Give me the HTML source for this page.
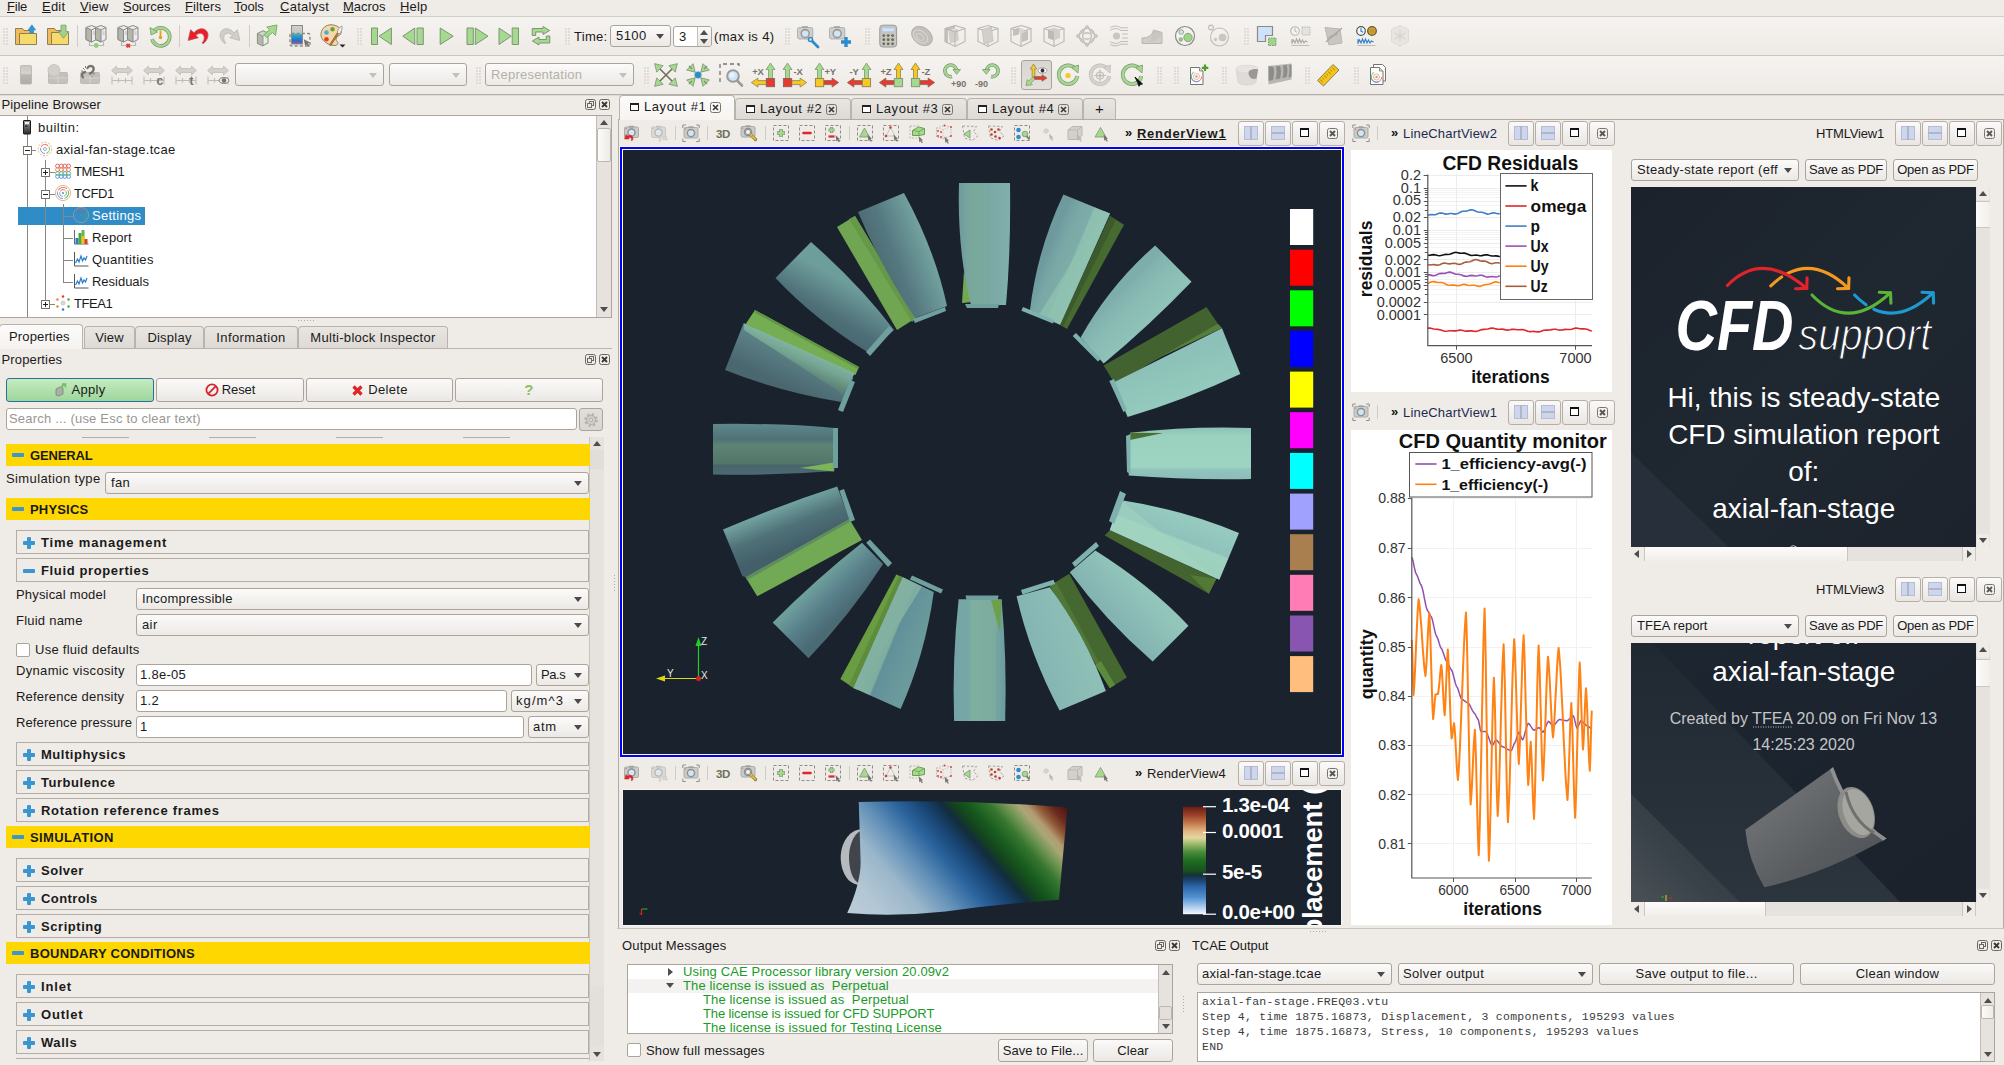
<!DOCTYPE html><html><head><meta charset="utf-8"><title>TCAE</title><style>
*{box-sizing:border-box;margin:0;padding:0}
html,body{width:2004px;height:1065px;overflow:hidden;background:#efebe7}
body{position:relative;font-family:"Liberation Sans",sans-serif;font-size:13px;color:#1a1a1a;letter-spacing:.2px}
.a{position:absolute}
.t{position:absolute;white-space:nowrap;line-height:16px;height:16px}
.b{font-weight:bold}
.hl{position:absolute;height:1px;background:#c6c0b9}
.vl{position:absolute;width:1px;background:#c6c0b9}
.btn{position:absolute;border:1px solid #aaa49d;border-radius:3px;background:linear-gradient(#fbfaf9,#ebe8e4);text-align:center;white-space:nowrap;line-height:20px;overflow:hidden}
.cmb{position:absolute;border:1px solid #aaa49d;border-radius:3px;background:linear-gradient(#fcfbfa,#ece9e5);white-space:nowrap;line-height:20px;padding-left:5px;overflow:hidden}
.cmb:after{content:"";position:absolute;right:6px;top:50%;margin-top:-2px;border:4px solid transparent;border-top:5px solid #4a4a4a;border-bottom:0}
.cmb.dis{color:#b5b0aa}
.cmb.dis:after{border-top-color:#c5c0ba}
.inp{position:absolute;border:1px solid #aaa49d;border-radius:3px;background:#fff;white-space:nowrap;line-height:20px;padding-left:4px;overflow:hidden}
.chk{position:absolute;width:14px;height:14px;border:1px solid #aaa49d;border-radius:2px;background:#fff}
.box{position:absolute;border:1px solid #aaa49d;background:#fff}
.grp{position:absolute;left:16px;width:573px;height:24px;border:1px solid #b3ada6;background:#efebe7}
.grp .t{left:24px;top:4px;font-weight:bold}
.ylw{position:absolute;left:6px;width:584px;height:22px;background:#ffd700}
.ylw .t{left:24px;top:3.5px;font-weight:bold}
.plus{position:absolute;left:6px;top:6px;width:12px;height:12px}
.plus:before{content:"";position:absolute;left:0;top:4px;width:12px;height:4px;background:#3b95d0;border-radius:1px}
.plus:after{content:"";position:absolute;left:4px;top:0;width:4px;height:12px;background:#3b95d0;border-radius:1px}
.minus{position:absolute;left:6px;top:10px;width:12px;height:4px;background:#3b95d0;border-radius:1px}
.sbv{position:absolute;width:15px;background:#e6e3df;border:1px solid #c2bdb6}
.sbh{position:absolute;height:14px;background:#e6e3df;border:1px solid #c2bdb6}
.thumb{position:absolute;background:linear-gradient(90deg,#fcfbfa,#eeebe7);border:1px solid #bdb7b0;border-radius:2px}
.thumbh{position:absolute;background:linear-gradient(#fdfcfb,#f1eeea);border:0;border-left:1px solid #cbc6c0;border-right:1px solid #cbc6c0;margin-top:-1px;height:14px !important}
.au{position:absolute;border:4px solid transparent;border-bottom:5px solid #4d4d4d;border-top:0}
.ad{position:absolute;border:4px solid transparent;border-top:5px solid #4d4d4d;border-bottom:0}
.al{position:absolute;border:4px solid transparent;border-right:5px solid #4d4d4d;border-left:0}
.ar{position:absolute;border:4px solid transparent;border-left:5px solid #4d4d4d;border-right:0}
.vbtn{position:absolute;width:26px;height:25px;border:1px solid #b5afa8;border-radius:3px;background:linear-gradient(#fbfaf9,#e9e6e2)}
.tab{position:absolute;border:1px solid #b9b3ac;border-bottom:0;border-radius:4px 4px 0 0;background:linear-gradient(#e9e5e1,#ddd9d4);white-space:nowrap;text-align:center}
.tab.sel{background:linear-gradient(#fcfbfa,#f6f3f0)}
.grip{position:absolute;width:6px;height:18px;margin-top:3px;background-image:linear-gradient(#cbc6c0,#cbc6c0);background-size:1px 1px;background-repeat:no-repeat;background-image:radial-gradient(circle at 1px 1px,#d2cdc7 0.5px,transparent 1px);background-size:3px 3px;background-repeat:repeat}
.ic{position:absolute;width:24px;height:24px}
.vi{position:absolute;width:16px;height:16px}
svg{display:block;overflow:visible;letter-spacing:0}
</style></head><body><div class="t " style="left:7px;top:-1px;font-size:13px;letter-spacing:-0.22px;"><u>F</u>ile</div><div class="t " style="left:42px;top:-1px;font-size:13px;letter-spacing:0.21px;"><u>E</u>dit</div><div class="t " style="left:80px;top:-1px;font-size:13px;letter-spacing:0.13px;"><u>V</u>iew</div><div class="t " style="left:123px;top:-1px;font-size:13px;letter-spacing:-0.03px;"><u>S</u>ources</div><div class="t " style="left:185px;top:-1px;font-size:13px;letter-spacing:0.08px;"><u>F</u>ilters</div><div class="t " style="left:234px;top:-1px;font-size:13px;letter-spacing:-0.16px;"><u>T</u>ools</div><div class="t " style="left:280px;top:-1px;font-size:13px;letter-spacing:0.28px;"><u>C</u>atalyst</div><div class="t " style="left:343px;top:-1px;font-size:13px;letter-spacing:-0.01px;"><u>M</u>acros</div><div class="t " style="left:400px;top:-1px;font-size:13px;letter-spacing:0.16px;"><u>H</u>elp</div><div class="hl" style="left:0;top:16px;width:2004px;background:#d2cdc7"></div><div class="a" style="left:0;top:17px;width:2004px;height:38px;background:linear-gradient(#f5f3f0,#eeeae6)"></div><div class="hl" style="left:0;top:55px;width:2004px;background:#c9c4bd"></div><div class="a" style="left:0;top:56px;width:2004px;height:38px;background:linear-gradient(#f5f3f0,#eeeae6)"></div><div class="hl" style="left:0;top:94px;width:2004px;background:#b5b0aa"></div><div class="hl" style="left:0;top:95px;width:2004px;background:#dedad5"></div><div class="grip" style="left:3px;top:25px"></div><svg class="ic" style="left:14px;top:24px;width:24px;height:24px" viewBox="0 0 24 24"><path d="M1.500 4.500h7l1.500 2h6v14h-14.500z" fill="#f3ba5c" stroke="#8b8158" stroke-width="1"/><path d="M5.500 9.500h17v11h-17z" fill="#f6da6c" stroke="#8b8158" stroke-width="1"/><path d="M17.900 .8l3.800 5.200h-2.100v3h-3.400v-3h-2.100z" fill="#2c98dc" stroke="#2c82bc" stroke-width=".5"/></svg><svg class="ic" style="left:46px;top:24px;width:24px;height:24px" viewBox="0 0 24 24"><path d="M1.500 4.500h7l1.500 2h6v14h-14.500z" fill="#f3ba5c" stroke="#8b8158"/><path d="M5.500 8.500h17v12h-17z" fill="#f6da6c" stroke="#8b8158"/><path d="M15 1.200h5v6.300h2.600l-5.100 6.800-5.100-6.800h2.600z" fill="#9ed488" stroke="#7e9572" stroke-width=".8"/></svg><div class="vl" style="left:77px;top:25px;height:22px;background:#d0cbc5"></div><svg class="ic" style="left:84px;top:24px;width:24px;height:24px" viewBox="0 0 24 24"><path d="M2 3.500l5.500-2 5 2v12l-5 2.500-5.500-2.500z" fill="#eceaf0" stroke="#8a8a86" stroke-width="1"/><path d="M2 3.500l5.500 2.500v12l-5.500-2.500z" fill="#b4b7a8" stroke="#8a8a86" stroke-width="1"/><path d="M7.5 6l5-2.500" stroke="#8a8a86" stroke-width="1" fill="none"/><path d="M9 8h2M9 10h2" stroke="#aaa" stroke-width=".8"/><path d="M11.5 3.500l5.500-2 5 2v12l-5 2.500-5.500-2.500z" fill="#eceaf0" stroke="#8a8a86" stroke-width="1"/><path d="M11.5 3.500l5.500 2.500v12l-5.500-2.500z" fill="#b4b7a8" stroke="#8a8a86" stroke-width="1"/><path d="M17 6l5-2.500" stroke="#8a8a86" stroke-width="1" fill="none"/><path d="M18.5 8h2M18.5 10h2" stroke="#aaa" stroke-width=".8"/><path d="M5.500 18v3.500h14v-3.500" fill="none" stroke="#b8b8b8" stroke-width="1.200"/><circle cx="12.200" cy="21.500" r="2.400" fill="#8fce7a"/></svg><svg class="ic" style="left:116px;top:24px;width:24px;height:24px" viewBox="0 0 24 24"><path d="M2 3.500l5.500-2 5 2v12l-5 2.500-5.500-2.500z" fill="#eceaf0" stroke="#8a8a86" stroke-width="1"/><path d="M2 3.500l5.500 2.500v12l-5.500-2.500z" fill="#b4b7a8" stroke="#8a8a86" stroke-width="1"/><path d="M7.5 6l5-2.500" stroke="#8a8a86" stroke-width="1" fill="none"/><path d="M9 8h2M9 10h2" stroke="#aaa" stroke-width=".8"/><path d="M11.5 3.500l5.500-2 5 2v12l-5 2.500-5.500-2.500z" fill="#eceaf0" stroke="#8a8a86" stroke-width="1"/><path d="M11.5 3.500l5.500 2.500v12l-5.500-2.500z" fill="#b4b7a8" stroke="#8a8a86" stroke-width="1"/><path d="M17 6l5-2.500" stroke="#8a8a86" stroke-width="1" fill="none"/><path d="M18.5 8h2M18.5 10h2" stroke="#aaa" stroke-width=".8"/><path d="M5.500 18v3.500h14v-3.500" fill="none" stroke="#b8b8b8" stroke-width="1.200"/><path d="M10.500 20l3.400 3.400M13.900 20l-3.400 3.400" stroke="#e03a30" stroke-width="1.800"/></svg><svg class="ic" style="left:148px;top:24px;width:24px;height:24px" viewBox="0 0 24 24"><path d="M5.500 7.500A9 9 0 1 1 4 15" fill="none" stroke="#7e9572" stroke-width="3.600"/><path d="M5.500 7.500A9 9 0 1 1 4 15" fill="none" stroke="#a6d990" stroke-width="2.200"/><path d="M2 3.500l1 7.500 6.500-3z" fill="#a6d990" stroke="#7e9572" stroke-width=".8"/><path d="M12.500 6.500v6" stroke="#d9a520" stroke-width="1.800"/><circle cx="12.500" cy="13.500" r="1.700" fill="#d9a520"/></svg><div class="vl" style="left:179px;top:25px;height:22px;background:#d0cbc5"></div><svg class="ic" style="left:186px;top:24px;width:24px;height:24px" viewBox="0 0 24 24"><path d="M4.600 5.800L2.100 16.400L12.200 13.800L10 11.500C12 8.500 17.500 8 18.200 13C18.500 15.500 17.500 17.500 16 19L17.500 19.400C21 16.500 23 12 21.500 8.500C19.500 4 13 3 8 8.800Z" fill="#ee1c24" stroke="#b85058" stroke-width=".8" stroke-linejoin="round"/></svg><svg class="ic" style="left:218px;top:24px;width:24px;height:24px" viewBox="0 0 24 24"><g transform="translate(24,0) scale(-1,1)"><path d="M4.600 5.800L2.100 16.400L12.200 13.800L10 11.500C12 8.500 17.500 8 18.200 13C18.500 15.500 17.500 17.500 16 19L17.500 19.400C21 16.500 23 12 21.500 8.500C19.500 4 13 3 8 8.800Z" fill="#d0cecb" stroke="#b9b6b2" stroke-width=".8" stroke-linejoin="round"/></g></svg><div class="vl" style="left:249px;top:25px;height:22px;background:#d0cbc5"></div><svg class="ic" style="left:255px;top:24px;width:24px;height:24px" viewBox="0 0 24 24"><path d="M2.500 9.500l5.500-2.500 5 2v10l-5 2.500-5.500-2.500z" fill="#eceaf0" stroke="#7fae6c" stroke-width="1.200"/><path d="M2.500 9.500l5.500 2.500v10l-5.500-2.500z" fill="#b4b7a8" stroke="#8a8a86" stroke-width=".8"/><path d="M2.500 9.500l5.500 2.500 5-3-5-2z" fill="#d5d5d0" stroke="#8a8a86" stroke-width=".6"/><path d="M11.500 13.500l-2.500-2.800 5.500-5-2.800-2.700 10.300-2-1.500 10.500-3-3z" fill="#a6d990" stroke="#7fae6c" stroke-width="1"/></svg><svg class="ic" style="left:287px;top:24px;width:24px;height:24px" viewBox="0 0 24 24"><defs><linearGradient id="csg" x1="0" y1="0" x2="0" y2="1"><stop offset="0" stop-color="#d0d0ce"/><stop offset=".42" stop-color="#c4c4c2"/><stop offset=".46" stop-color="#3fb8a0"/><stop offset=".58" stop-color="#2a9ad8"/><stop offset=".8" stop-color="#2a6fc0"/><stop offset="1" stop-color="#8a55b0"/></linearGradient></defs><rect x="4.500" y="1.500" width="11" height="18.500" fill="url(#csg)" stroke="#8a8a86"/><rect x="3" y="9.500" width="20" height="12.500" rx="1.500" fill="none" stroke="#8a8a86" stroke-width="1.400" stroke-dasharray="3 2.200"/><path d="M16.800 15.300l6.300 3.200-2.200.9 2 2.600-1.200 1-2-2.600-1.500 1.800z" fill="#77736d"/></svg><svg class="ic" style="left:320px;top:24px;width:24px;height:24px" viewBox="0 0 24 24"><path d="M11 .8c7.500 0 11 5 10 8.500-1 3-5 2.500-5 6 0 2 3 2.500 1.500 5-1 1.800-5 1.500-8.500 0C2 17.500.5 12 1 9.500 2 4 6 .8 11 .8z" fill="#f6d7a8" stroke="#8b8158" stroke-width="1"/><circle cx="6.500" cy="8.500" r="2.300" fill="#3cb0e8"/><circle cx="12.500" cy="5.200" r="2.200" fill="#64a434"/><circle cx="6.500" cy="15.300" r="2.300" fill="#e63a2c"/><path d="M10 21.500l9-14" stroke="#8a5a2a" stroke-width="2.200"/><path d="M10 21.500l9-14" stroke="#b98a4a" stroke-width="1"/><path d="M17.500 8.500c0-3 2-5.500 4.500-6.500.5 2.500-.5 6-3 8z" fill="#f6f6f6" stroke="#8a8a86" stroke-width=".8"/><path d="M19.500 20.500h6l-3 3z" fill="#222"/></svg><div class="grip" style="left:357px;top:25px"></div><svg class="ic" style="left:369px;top:24px;width:24px;height:24px" viewBox="0 0 24 24"><path d="M2.500 4h6v16.500h-6z" fill="#a6d990" stroke="#7e9572" stroke-width="1" stroke-linejoin="round"/><path d="M10 12.200l12.400-8.200v16.500z" fill="#a6d990" stroke="#7e9572" stroke-width="1" stroke-linejoin="round"/></svg><svg class="ic" style="left:401px;top:24px;width:24px;height:24px" viewBox="0 0 24 24"><path d="M1.800 12.200l12-8.200v16.500z" fill="#a6d990" stroke="#7e9572" stroke-width="1" stroke-linejoin="round"/><path d="M16 4h6.300v16.500h-6.300z" fill="#a6d990" stroke="#7e9572" stroke-width="1" stroke-linejoin="round"/></svg><svg class="ic" style="left:434px;top:24px;width:24px;height:24px" viewBox="0 0 24 24"><path d="M6.200 4l13 8.200-13 8.300z" fill="#a6d990" stroke="#7e9572" stroke-width="1" stroke-linejoin="round"/></svg><svg class="ic" style="left:465px;top:24px;width:24px;height:24px" viewBox="0 0 24 24"><path d="M2 4h6.300v16.500h-6.300z" fill="#a6d990" stroke="#7e9572" stroke-width="1" stroke-linejoin="round"/><path d="M10.300 4l12.700 8.200-12.700 8.300z" fill="#a6d990" stroke="#7e9572" stroke-width="1" stroke-linejoin="round"/></svg><svg class="ic" style="left:497px;top:24px;width:24px;height:24px" viewBox="0 0 24 24"><path d="M2 4l12.200 8.200-12.200 8.300z" fill="#a6d990" stroke="#7e9572" stroke-width="1" stroke-linejoin="round"/><path d="M15.200 4h6.300v16.500h-6.300z" fill="#a6d990" stroke="#7e9572" stroke-width="1" stroke-linejoin="round"/></svg><svg class="ic" style="left:529px;top:24px;width:24px;height:24px" viewBox="0 0 24 24"><path d="M3.200 11.500v-7h10.800v-2l6.600 4-6.600 4v-2.500h-7.300v3.500z" fill="#a6d990" stroke="#7e9572" stroke-width="1" stroke-linejoin="round"/><path d="M20.800 12v7h-10.800v2l-6.600-4 6.600-4v2.500h7.300v-3.500z" fill="#a6d990" stroke="#7e9572" stroke-width="1" stroke-linejoin="round"/></svg><div class="grip" style="left:565px;top:25px"></div><div class="t " style="left:574px;top:29px;font-size:13px;letter-spacing:0.28px;">Time:</div><div class="cmb" style="left:610px;top:25px;width:61px;height:22px;line-height:19px;padding-left:5px;font-size:13px;letter-spacing:0.40px;">5100</div><div class="inp" style="left:673px;top:25.500px;width:39px;height:21.500px;line-height:19px;padding-left:5px;font-size:13px;letter-spacing:0.40px;">3</div><div class="a" style="left:697px;top:26.500px;width:14px;height:19.500px;border-left:1px solid #c5bfb8;background:linear-gradient(#fbfaf9,#e9e6e2);border-radius:0 2px 2px 0"></div><div class="au" style="left:700px;top:30px;border-width:0 4px 5px 4px"></div><div class="ad" style="left:700px;top:38.500px;border-width:5px 4px 0 4px"></div><div class="t " style="left:714px;top:29px;font-size:13px;letter-spacing:0.33px;">(max is 4)</div><div class="grip" style="left:785px;top:25px"></div><svg class="ic" style="left:796px;top:24px;width:24px;height:24px" viewBox="0 0 24 24"><rect x="1.5" y="3.5" width="15.300" height="11.500" rx="2" fill="#cfcfcd" stroke="#a5a5a2" stroke-width=".8"/><rect x="6" y="2.2" width="6" height="1.800" fill="#a5a5a2"/><circle cx="9.2" cy="9.6" r="4" fill="#cfe6f8" stroke="#9a9a98" stroke-width="1.600"/><path d="M15 16l7 7" stroke="#2a8ccc" stroke-width="2.800" stroke-linecap="round"/><circle cx="14.500" cy="15.500" r="2" fill="#efebe7" stroke="#2a8ccc" stroke-width="1.600"/></svg><svg class="ic" style="left:828px;top:24px;width:24px;height:24px" viewBox="0 0 24 24"><rect x="1.5" y="3.5" width="15.300" height="11.500" rx="2" fill="#cfcfcd" stroke="#a5a5a2" stroke-width=".8"/><rect x="6" y="2.2" width="6" height="1.800" fill="#a5a5a2"/><circle cx="9.2" cy="9.6" r="4" fill="#cfe6f8" stroke="#9a9a98" stroke-width="1.600"/><path d="M18 13v10M13 18h10" stroke="#2a8ccc" stroke-width="3.400"/></svg><div class="grip" style="left:865px;top:25px"></div><svg class="ic" style="left:876px;top:24px;width:24px;height:24px" viewBox="0 0 24 24"><rect x="3.800" y="1.200" width="16.800" height="21.800" rx="3" fill="#c6c6c4" stroke="#98989a" stroke-width="1"/><rect x="6" y="3.800" width="12.400" height="4" rx="1.200" fill="#cfe2fa" stroke="#a8b8d0" stroke-width=".5"/><circle cx="7.8" cy="11.6" r="1.400" fill="#6c6a48"/><circle cx="7.8" cy="15.7" r="1.400" fill="#6c6a48"/><circle cx="7.8" cy="19.8" r="1.400" fill="#6c6a48"/><circle cx="12.2" cy="11.6" r="1.400" fill="#6c6a48"/><circle cx="12.2" cy="15.7" r="1.400" fill="#6c6a48"/><circle cx="12.2" cy="19.8" r="1.400" fill="#6c6a48"/><circle cx="16.6" cy="11.6" r="1.400" fill="#6c6a48"/><circle cx="16.6" cy="15.7" r="1.400" fill="#6c6a48"/><circle cx="16.6" cy="19.8" r="1.400" fill="#6c6a48"/></svg><svg class="ic" style="left:910px;top:24px;width:24px;height:24px" viewBox="0 0 24 24"><ellipse cx="12" cy="12" rx="11.500" ry="8.500" transform="rotate(38 12 12)" fill="#c2bfbb" stroke="#b0ada9" stroke-width=".8"/><ellipse cx="10.500" cy="12.500" rx="8" ry="5.500" transform="rotate(38 10.500 12.500)" fill="none" stroke="#d6d3cf" stroke-width="1.200"/><ellipse cx="10" cy="13" rx="4" ry="2.700" transform="rotate(38 10 13)" fill="none" stroke="#d6d3cf" stroke-width="1"/></svg><svg class="ic" style="left:943px;top:24px;width:24px;height:24px" viewBox="0 0 24 24"><path d="M2 4.500l10-3v3l-7 2.500v13l-3-2.500z" fill="#c4c1bc"/><path d="M5.500 7.500l9-3 1.500 12-9 3z" fill="#d2cfcb"/><path d="M2 4.500l10-3 10 3v13l-10 5-10-5z" fill="none" stroke="#bab7b2" stroke-width="1.100"/><path d="M2 4.500l10 3.500 10-3.500M12 8v14.500" fill="none" stroke="#bab7b2" stroke-width="1.100"/></svg><svg class="ic" style="left:976px;top:24px;width:24px;height:24px" viewBox="0 0 24 24"><path d="M2 4.500l10-3 10 3v13l-10 5-10-5z" fill="none" stroke="#bab7b2" stroke-width="1.100"/><path d="M2 4.500l10 3.500 10-3.500M12 8v14.500" fill="none" stroke="#bab7b2" stroke-width="1.100"/><path d="M6 5.500l9.500-2.500 1.500 14-9 3z" fill="#d2cfcb" stroke="#bab7b2" stroke-width=".6"/></svg><svg class="ic" style="left:1009px;top:24px;width:24px;height:24px" viewBox="0 0 24 24"><path d="M2 4.500l10-3 10 3v13l-10 5-10-5z" fill="none" stroke="#bab7b2" stroke-width="1.100"/><path d="M2 4.500l10 3.500 10-3.500M12 8v14.500" fill="none" stroke="#bab7b2" stroke-width="1.100"/><path d="M4 5.500l6-2v7l-6 1.500zM13 8.500l6-2v9.500l-6 2z" fill="#c4c1bc"/><path d="M10 3.500l4.500 1.500v4.500l-4.500-1.500z" fill="#d8d5d1"/></svg><svg class="ic" style="left:1042px;top:24px;width:24px;height:24px" viewBox="0 0 24 24"><path d="M2 4.500l10-3 10 3v13l-10 5-10-5z" fill="none" stroke="#bab7b2" stroke-width="1.100"/><path d="M2 4.500l10 3.500 10-3.500M12 8v14.500" fill="none" stroke="#bab7b2" stroke-width="1.100"/><path d="M6 5.500l6-1.800 6 1.800v8.500l-6 2.500-6-2.500z" fill="#d2cfcb"/><path d="M6 5.500l6 2.200v8.800l-6-2.500z" fill="#bdbab5"/></svg><svg class="ic" style="left:1075px;top:24px;width:24px;height:24px" viewBox="0 0 24 24"><path d="M12 3l9 9-9 9-9-9z" fill="none" stroke="#bab7b2" stroke-width="1.200"/><ellipse cx="12" cy="12" rx="4.500" ry="3.200" fill="none" stroke="#bab7b2" stroke-width="1.200"/><circle cx="12" cy="12" r="8" fill="none" stroke="#c6c3be" stroke-width="1"/><circle cx="12" cy="3" r="1.500" fill="#d2cfcb" stroke="#bab7b2" stroke-width=".7"/><circle cx="21" cy="12" r="1.500" fill="#d2cfcb" stroke="#bab7b2" stroke-width=".7"/><circle cx="12" cy="21" r="1.500" fill="#d2cfcb" stroke="#bab7b2" stroke-width=".7"/><circle cx="3" cy="12" r="1.500" fill="#d2cfcb" stroke="#bab7b2" stroke-width=".7"/><circle cx="7.5" cy="7.5" r="1.500" fill="#d2cfcb" stroke="#bab7b2" stroke-width=".7"/><circle cx="16.5" cy="7.5" r="1.500" fill="#d2cfcb" stroke="#bab7b2" stroke-width=".7"/><circle cx="7.5" cy="16.5" r="1.500" fill="#d2cfcb" stroke="#bab7b2" stroke-width=".7"/><circle cx="16.5" cy="16.5" r="1.500" fill="#d2cfcb" stroke="#bab7b2" stroke-width=".7"/></svg><svg class="ic" style="left:1107px;top:24px;width:24px;height:24px" viewBox="0 0 24 24"><circle cx="9.500" cy="12" r="3.600" fill="#c9c6c1"/><path d="M3 6.500c4-2.500 8-2.500 11 0h7M3 17.500c4 2.500 8 2.500 11 0h7M3 3.500c4-1.800 8-1.800 11 .3h7M3 20.500c4 1.800 8 1.800 11-.3h7M15 10h6M15 14h6" fill="none" stroke="#c0bdb8" stroke-width="1"/></svg><svg class="ic" style="left:1140px;top:24px;width:24px;height:24px" viewBox="0 0 24 24"><path d="M2 19.500v-5.500c6 0 10-2.500 11.500-8l8.500 2.500v11z" fill="#d0cdc9" stroke="#bab7b2" stroke-width="1"/><path d="M13.500 6l8.500 2.500c-2.500 6-6 8.500-12 9z" fill="#c4c1bc" opacity=".6"/></svg><svg class="ic" style="left:1173px;top:24px;width:24px;height:24px" viewBox="0 0 24 24"><circle cx="12" cy="12" r="9.500" fill="#f4f2ef" stroke="#8a8a86" stroke-width="1.200"/><circle cx="8.200" cy="8" r="2.300" fill="#cfeaea" stroke="#8a8a86" stroke-width=".8"/><circle cx="15" cy="13.500" r="4.200" fill="#9ed488" stroke="#7e9572" stroke-width=".8"/><circle cx="7.800" cy="15.500" r="1.700" fill="#9ed488" stroke="#7e9572" stroke-width=".8"/></svg><svg class="ic" style="left:1206px;top:24px;width:24px;height:24px" viewBox="0 0 24 24"><circle cx="13.500" cy="13" r="9" fill="none" stroke="#c0bdb8" stroke-width="1.100"/><circle cx="5" cy="3.500" r="2.400" fill="#efebe7" stroke="#c0bdb8" stroke-width="1.100"/><circle cx="16.500" cy="13.500" r="3.800" fill="#c9c6c1"/><circle cx="9.500" cy="15.500" r="1.700" fill="#c9c6c1"/></svg><div class="grip" style="left:1244px;top:25px"></div><svg class="ic" style="left:1256px;top:24px;width:24px;height:24px" viewBox="0 0 24 24"><path d="M1.500 2.500h15v9h-7v6h-8z" fill="#cfe2fa" stroke="#8a8a86" stroke-width="1.200"/><rect x="12.500" y="14" width="7.500" height="7.500" fill="#9ed488" stroke="#7e9572" stroke-width="1" stroke-dasharray="1.500 1"/></svg><svg class="ic" style="left:1289px;top:24px;width:24px;height:24px" viewBox="0 0 24 24"><circle cx="6" cy="7" r="4.300" fill="#f4f2ef" stroke="#bab7b2" stroke-width="1.100"/><path d="M6 4.200v3l2 1" fill="none" stroke="#bab7b2"/><rect x="13" y="3" width="8" height="8" fill="#e6e3df" stroke="#bab7b2" stroke-dasharray="1.500 1"/><path d="M3 20v-5M3 19l1.500-3 1.500 3 1.500-4 1.500 4 1.500-4 1.500 4 1.500-3 1.500 3 1.500-2 2 1" fill="none" stroke="#aaa7a2" stroke-width="1.100"/><path d="M2.500 21.500h18" stroke="#c0bdb8" stroke-width="1"/></svg><svg class="ic" style="left:1322px;top:24px;width:24px;height:24px" viewBox="0 0 24 24"><path d="M3 3.500l15 1.500 2 14-13 2z" fill="#c9c6c1" stroke="#bab7b2"/><path d="M4 18l16-14" stroke="#a9a59f" stroke-width="1.200"/><path d="M5.500 15l1-2 1 1.500 1-3 1.200 2 1-3 1.200 2 1-3 1.200 2 1-3 1 1.500" fill="none" stroke="#a9a59f" stroke-width=".9"/></svg><svg class="ic" style="left:1355px;top:24px;width:24px;height:24px" viewBox="0 0 24 24"><circle cx="6" cy="7" r="4.300" fill="#f4f6fa" stroke="#555" stroke-width="1.200"/><path d="M6 4.200v3l2.200 1" fill="none" stroke="#2a7ccc" stroke-width="1.200"/><circle cx="17" cy="7" r="4.300" fill="#d9a520" stroke="#6a5a3a" stroke-width="1.300"/><circle cx="17" cy="7" r="2.500" fill="#b89048" opacity=".7"/><path d="M3 20v-5M3 19l1.500-3 1.500 3 1.500-4 1.500 4 1.500-4 1.500 4 1.500-3 1.500 3 1.500-2 2 1" fill="none" stroke="#2a7ccc" stroke-width="1.100"/><path d="M2.500 21.500h18" stroke="#c0bdb8" stroke-width="1"/></svg><svg class="ic" style="left:1388px;top:24px;width:24px;height:24px" viewBox="0 0 24 24"><path d="M3.500 5.500l8.500-4 8.500 4v12l-8.500 4.500-8.500-4.500z" fill="#e9e6e2" stroke="#dedbd7" stroke-width="1"/><path d="M12 6v12M6.500 9l11 6M17.500 9l-11 6" stroke="#d0cdc8" stroke-width="1"/></svg><div class="grip" style="left:3px;top:64px"></div><svg class="ic" style="left:14px;top:63px;width:24px;height:24px" viewBox="0 0 24 24"><defs><linearGradient id="gg1" x1="0" y1="0" x2="0" y2="1"><stop offset="0" stop-color="#c9c6c2"/><stop offset=".45" stop-color="#d6d3cf"/><stop offset=".5" stop-color="#bab7b3"/><stop offset="1" stop-color="#b0ada9"/></linearGradient></defs><rect x="6.500" y="2.500" width="11" height="18.500" rx="1" fill="url(#gg1)" stroke="#b5b2ae" stroke-width=".8"/></svg><svg class="ic" style="left:46px;top:63px;width:24px;height:24px" viewBox="0 0 24 24"><rect x="2.500" y="9.500" width="19" height="11" rx="1" fill="#c4c1bd" stroke="#b5b2ae" stroke-width=".8"/><path d="M2.500 15h19M12 9.500v11" stroke="#d6d3cf" stroke-width="1"/><circle cx="8" cy="7.500" r="6" fill="#d3d0cc" stroke="#c0bdb8" stroke-width=".8"/></svg><svg class="ic" style="left:78px;top:63px;width:24px;height:24px" viewBox="0 0 24 24"><rect x="2.500" y="9.500" width="19" height="11" rx="1" fill="#c4c1bd" stroke="#b5b2ae" stroke-width=".8"/><path d="M2.500 15h19M12 9.500v11" stroke="#d6d3cf" stroke-width="1"/><path d="M5 14.500c-2-2-1-5 2-5.500M9.500 5c2-3.500 7-2 6 2-0.500 2-2 3-3.500 3.500" fill="none" stroke="#77736d" stroke-width="2.400" stroke-linecap="round"/><path d="M5 5l1.500 1.500M7.500 3v2M3 8h2M13 12.500l1.500 1.500M15 11h2" stroke="#77736d" stroke-width=".9"/></svg><svg class="ic" style="left:110px;top:63px;width:24px;height:24px" viewBox="0 0 24 24"><path d="M1.500 7.500l5-4.500v2.500h11v-2.500l5 4.500-5 4.500v-2.500h-11v2.500z" fill="#d3d0cc" stroke="#c0bdb8" stroke-width=".8"/><path d="M2 13.500v8M22 13.500v8M2 17.500h20M8.500 15v5M15.500 15v5" stroke="#c0bdb8" stroke-width="1.100" fill="none"/></svg><svg class="ic" style="left:142px;top:63px;width:24px;height:24px" viewBox="0 0 24 24"><path d="M1.500 7.500l5-4.500v2.500h11v-2.500l5 4.500-5 4.500v-2.500h-11v2.500z" fill="#d3d0cc" stroke="#c0bdb8" stroke-width=".8"/><path d="M2 13.500v8M22 13.500v8M2 17.500h20M8.500 15v5M15.500 15v5" stroke="#c0bdb8" stroke-width="1.100" fill="none"/><text x="14.500" y="22" font-family="Liberation Sans" font-weight="bold" font-size="12" fill="#77736d">c</text></svg><svg class="ic" style="left:174px;top:63px;width:24px;height:24px" viewBox="0 0 24 24"><path d="M1.500 7.500l5-4.500v2.500h11v-2.500l5 4.500-5 4.500v-2.500h-11v2.500z" fill="#d3d0cc" stroke="#c0bdb8" stroke-width=".8"/><path d="M2 13.500v8M22 13.500v8M2 17.500h20M8.500 15v5M15.500 15v5" stroke="#c0bdb8" stroke-width="1.100" fill="none"/><text x="15.500" y="22" font-family="Liberation Sans" font-weight="bold" font-size="12" fill="#77736d">t</text></svg><svg class="ic" style="left:206px;top:63px;width:24px;height:24px" viewBox="0 0 24 24"><path d="M1.500 7.500l5-4.500v2.500h11v-2.500l5 4.500-5 4.500v-2.500h-11v2.500z" fill="#d3d0cc" stroke="#c0bdb8" stroke-width=".8"/><path d="M2 13.500v8M22 13.500v8M2 17.500h20M8.500 15v5M15.500 15v5" stroke="#c0bdb8" stroke-width="1.100" fill="none"/><ellipse cx="18" cy="17.500" rx="4.800" ry="2.800" fill="#efebe7" stroke="#77736d" stroke-width="1"/><circle cx="18" cy="17.500" r="2.200" fill="#77736d"/></svg><div class="cmb dis" style="left:235px;top:63px;width:149px;height:23px;"></div><div class="cmb dis" style="left:389px;top:63px;width:78px;height:23px;"></div><div class="grip" style="left:476px;top:64px"></div><div class="cmb dis" style="left:485px;top:63px;width:149px;height:23px;line-height:21px;font-size:13px;letter-spacing:0.21px;">Representation</div><div class="grip" style="left:644px;top:64px"></div><svg class="ic" style="left:654px;top:63px;width:24px;height:24px" viewBox="0 0 24 24"><path d="M3.500 3.500l17 17M20.500 3.500l-17 17" stroke="#6f7058" stroke-width="1.600"/><path d="M0-4.200l4.500 7.500h-9z" transform="translate(3.6,3.6) rotate(-45)" fill="#a6d990" stroke="#7e9572" stroke-width=".8"/><path d="M0-4.200l4.500 7.500h-9z" transform="translate(20.4,3.6) rotate(45)" fill="#a6d990" stroke="#7e9572" stroke-width=".8"/><path d="M0-4.200l4.500 7.500h-9z" transform="translate(3.6,20.4) rotate(-135)" fill="#a6d990" stroke="#7e9572" stroke-width=".8"/><path d="M0-4.200l4.500 7.500h-9z" transform="translate(20.4,20.4) rotate(135)" fill="#a6d990" stroke="#7e9572" stroke-width=".8"/></svg><svg class="ic" style="left:686px;top:63px;width:24px;height:24px" viewBox="0 0 24 24"><circle cx="12" cy="12" r="3.300" fill="#2c8cd0" stroke="#5a9ac8" stroke-width=".6"/><path d="M0-4.200l4.500 7.500h-9z" transform="translate(6.2,6.2) rotate(135)" fill="#a6d990" stroke="#7e9572" stroke-width=".8"/><path d="M0-4.200l4.500 7.500h-9z" transform="translate(17.8,6.2) rotate(-135)" fill="#a6d990" stroke="#7e9572" stroke-width=".8"/><path d="M0-4.200l4.500 7.500h-9z" transform="translate(6.2,17.8) rotate(45)" fill="#a6d990" stroke="#7e9572" stroke-width=".8"/><path d="M0-4.200l4.500 7.500h-9z" transform="translate(17.8,17.8) rotate(-45)" fill="#a6d990" stroke="#7e9572" stroke-width=".8"/><path d="M3 3l3 3M21 3l-3 3M3 21l3-3M21 21l-3-3" stroke="#7e9572" stroke-width="1.400"/></svg><svg class="ic" style="left:719px;top:63px;width:24px;height:24px" viewBox="0 0 24 24"><path d="M1 19v-18h19v4" fill="none" stroke="#77736d" stroke-width="1.300" stroke-dasharray="4 3"/><circle cx="14" cy="13" r="5.800" fill="#cfe6f8" stroke="#9a9a98" stroke-width="2"/><circle cx="13" cy="12" r="2.500" fill="#e8f4fc"/><path d="M18.500 18l4.500 4.500" stroke="#9a9a98" stroke-width="2.600" stroke-linecap="round"/></svg><svg class="ic" style="left:751px;top:63px;width:24px;height:24px" viewBox="0 0 24 24"><path d="M19.500 0l4.400 6.500h-2.400v9h-4v-9h-2.400z" fill="#a6d990" stroke="#7e9572" stroke-width=".8"/><path d="M.4 19.600l6.500-4.500v2.500h8.500v4h-8.500v2.500z" fill="#f8c820" stroke="#8b8158" stroke-width=".8"/><rect x="15.300" y="15.500" width="8.300" height="8.200" fill="#e63a2c" stroke="#8b6158" stroke-width=".9"/><text x="1.2" y="11.500" font-family="Liberation Sans" font-weight="bold" font-size="9.500" fill="#77736d" letter-spacing="-.2">+X</text></svg><svg class="ic" style="left:783px;top:63px;width:24px;height:24px" viewBox="0 0 24 24"><g transform="translate(24,0) scale(-1,1)"><path d="M19.500 0l4.400 6.500h-2.400v9h-4v-9h-2.400z" fill="#a6d990" stroke="#7e9572" stroke-width=".8"/><path d="M.4 19.600l6.500-4.500v2.500h8.500v4h-8.500v2.500z" fill="#f8c820" stroke="#8b8158" stroke-width=".8"/><rect x="15.300" y="15.500" width="8.300" height="8.200" fill="#e63a2c" stroke="#8b6158" stroke-width=".9"/></g><text x="10.5" y="11.500" font-family="Liberation Sans" font-weight="bold" font-size="9.500" fill="#77736d" letter-spacing="-.2">-X</text></svg><svg class="ic" style="left:815px;top:63px;width:24px;height:24px" viewBox="0 0 24 24"><g transform="translate(24,0) scale(-1,1)"><path d="M19.500 0l4.400 6.500h-2.400v9h-4v-9h-2.400z" fill="#a6d990" stroke="#7e9572" stroke-width=".8"/><path d="M.4 19.600l6.500-4.500v2.500h8.500v4h-8.500v2.500z" fill="#e63a2c" stroke="#8b6158" stroke-width=".8"/><rect x="15.300" y="15.500" width="8.300" height="8.200" fill="#f8c820" stroke="#8b8158" stroke-width=".9"/></g><text x="9.5" y="11.500" font-family="Liberation Sans" font-weight="bold" font-size="9.500" fill="#77736d" letter-spacing="-.2">+Y</text></svg><svg class="ic" style="left:847px;top:63px;width:24px;height:24px" viewBox="0 0 24 24"><path d="M19.500 0l4.400 6.500h-2.400v9h-4v-9h-2.400z" fill="#a6d990" stroke="#7e9572" stroke-width=".8"/><path d="M.4 19.600l6.500-4.500v2.500h8.500v4h-8.500v2.500z" fill="#e63a2c" stroke="#8b6158" stroke-width=".8"/><rect x="15.300" y="15.500" width="8.300" height="8.200" fill="#f8c820" stroke="#8b8158" stroke-width=".9"/><text x="2.5" y="11.500" font-family="Liberation Sans" font-weight="bold" font-size="9.500" fill="#77736d" letter-spacing="-.2">-Y</text></svg><svg class="ic" style="left:879px;top:63px;width:24px;height:24px" viewBox="0 0 24 24"><path d="M19.500 0l4.400 6.500h-2.400v9h-4v-9h-2.400z" fill="#f8c820" stroke="#8b8158" stroke-width=".8"/><path d="M.4 19.600l6.500-4.500v2.500h8.500v4h-8.500v2.500z" fill="#e63a2c" stroke="#8b6158" stroke-width=".8"/><rect x="15.300" y="15.500" width="8.300" height="8.200" fill="#a6d990" stroke="#7e9572" stroke-width=".9"/><text x="1.5" y="11.500" font-family="Liberation Sans" font-weight="bold" font-size="9.500" fill="#77736d" letter-spacing="-.2">+Z</text></svg><svg class="ic" style="left:911px;top:63px;width:24px;height:24px" viewBox="0 0 24 24"><g transform="translate(24,0) scale(-1,1)"><path d="M19.500 0l4.400 6.500h-2.400v9h-4v-9h-2.400z" fill="#f8c820" stroke="#8b8158" stroke-width=".8"/><path d="M.4 19.600l6.500-4.500v2.500h8.500v4h-8.500v2.500z" fill="#e63a2c" stroke="#8b6158" stroke-width=".8"/><rect x="15.300" y="15.500" width="8.300" height="8.200" fill="#a6d990" stroke="#7e9572" stroke-width=".9"/></g><text x="10.5" y="11.500" font-family="Liberation Sans" font-weight="bold" font-size="9.500" fill="#77736d" letter-spacing="-.2">-Z</text></svg><svg class="ic" style="left:943px;top:63px;width:24px;height:24px" viewBox="0 0 24 24"><path d="M13.500 8A5.800 5.800 0 1 0 9 13.500" fill="none" stroke="#7e9572" stroke-width="3.600"/><path d="M13.500 8A5.800 5.800 0 1 0 9 13.500" fill="none" stroke="#a6d990" stroke-width="2.200"/><path d="M10 6.500h7.500l-3.800 4.800z" fill="#a6d990" stroke="#7e9572" stroke-width=".8"/><text x="8" y="24" font-family="Liberation Sans" font-weight="bold" font-size="9" fill="#77736d">+90</text></svg><svg class="ic" style="left:976px;top:63px;width:24px;height:24px" viewBox="0 0 24 24"><g transform="translate(24,0) scale(-1,1)"><path d="M13.500 8A5.800 5.800 0 1 0 9 13.500" fill="none" stroke="#7e9572" stroke-width="3.600"/><path d="M13.500 8A5.800 5.800 0 1 0 9 13.500" fill="none" stroke="#a6d990" stroke-width="2.200"/><path d="M10 6.500h7.500l-3.800 4.800z" fill="#a6d990" stroke="#7e9572" stroke-width=".8"/></g><text x="-1" y="24" font-family="Liberation Sans" font-weight="bold" font-size="9" fill="#77736d">-90</text></svg><div class="grip" style="left:1011px;top:64px"></div><div class="a" style="left:1021px;top:60px;width:31px;height:30px;border:1px solid #a9a39c;border-radius:3px;background:linear-gradient(#d9d5d0,#e3dfdb)"></div><svg class="ic" style="left:1024px;top:63px;width:24px;height:24px" viewBox="0 0 24 24"><path d="M9.500 1l3.200 5h-1.800v8h-2.800v-8h-1.800z" fill="#f8c820" stroke="#8b8158" stroke-width=".7"/><path d="M23 15l-5 3.200v-1.800h-8v-2.800h8v-1.800z" fill="#e63a2c" stroke="#8b6158" stroke-width=".7"/><path d="M2 22.500l1.200-6 1.500 1.500 4-4 2.200 2.200-4 4 1.500 1.500z" fill="#a6d990" stroke="#7e9572" stroke-width=".7"/><ellipse cx="18.500" cy="7.500" rx="4.300" ry="2.600" fill="#fff" stroke="#8a8a86" stroke-width=".8"/><circle cx="18.500" cy="7.500" r="1.900" fill="#333"/></svg><svg class="ic" style="left:1056px;top:63px;width:24px;height:24px" viewBox="0 0 24 24"><path d="M19 5.500A9.300 9.300 0 1 0 21.300 13" fill="none" stroke="#7e9572" stroke-width="3.800"/><path d="M19 5.500A9.300 9.300 0 1 0 21.300 13" fill="none" stroke="#a6d990" stroke-width="2.400"/><path d="M15.500 4.500l7-2.500-.5 8z" fill="#a6d990" stroke="#7e9572" stroke-width=".8"/><circle cx="12" cy="12.500" r="2.600" fill="#f8c820"/></svg><svg class="ic" style="left:1088px;top:63px;width:24px;height:24px" viewBox="0 0 24 24"><path d="M19 5.500A9.300 9.300 0 1 0 21.300 13" fill="none" stroke="#c0bdb8" stroke-width="3.800"/><path d="M19 5.500A9.300 9.300 0 1 0 21.300 13" fill="none" stroke="#d6d3cf" stroke-width="2.400"/><path d="M15.500 4.500l7-2.500-.5 8z" fill="#d6d3cf" stroke="#c0bdb8" stroke-width=".8"/><circle cx="12" cy="12.500" r="3.500" fill="none" stroke="#c0bdb8" stroke-width="1.200"/><path d="M12 6.500v12M6 12.500h12" stroke="#c0bdb8" stroke-width="1.200"/><circle cx="12" cy="12.500" r="1.500" fill="#c0bdb8"/></svg><svg class="ic" style="left:1120px;top:63px;width:24px;height:24px" viewBox="0 0 24 24"><path d="M19 5.500A9.300 9.300 0 1 0 21.300 13" fill="none" stroke="#7e9572" stroke-width="3.800"/><path d="M19 5.500A9.300 9.300 0 1 0 21.300 13" fill="none" stroke="#a6d990" stroke-width="2.400"/><path d="M15.500 4.500l7-2.500-.5 8z" fill="#a6d990" stroke="#7e9572" stroke-width=".8"/><path d="M15 14l7.500 7-2 .3-1.500 2-1.200-3.500z" fill="#111" stroke="#111" stroke-width="1" stroke-linejoin="round"/></svg><div class="grip" style="left:1157px;top:64px"></div><div class="grip" style="left:1174px;top:64px"></div><svg class="ic" style="left:1186px;top:63px;width:24px;height:24px" viewBox="0 0 24 24"><path d="M4.500 4.500h9l3.500 3.500v13.500h-12.500z" fill="#fdfdfd" stroke="#77736d" stroke-width="1"/><path d="M13.500 4.500v3.500h3.500" fill="#ddd" stroke="#77736d" stroke-width=".8"/><circle cx="10.5" cy="13.5" r="5.2" fill="none" stroke="#e66" stroke-width=".9" stroke-dasharray="10.92 21.84"/><circle cx="10.5" cy="13.5" r="5.2" fill="none" stroke="#6c6" stroke-width=".9" stroke-dasharray="10.92 21.84" transform="rotate(120 10.5 13.5)"/><circle cx="10.5" cy="13.5" r="5.2" fill="none" stroke="#69e" stroke-width=".9" stroke-dasharray="10.92 21.84" transform="rotate(60 10.5 13.5)"/><circle cx="10.5" cy="13.5" r="3" fill="none" stroke="#f0a070" stroke-width=".8"/><circle cx="10.5" cy="13.5" r="1.200" fill="#aaa"/><path d="M19 1.500v6.500M15.800 4.800h6.500" stroke="#4aa020" stroke-width="2.200"/></svg><div class="grip" style="left:1222px;top:64px"></div><svg class="ic" style="left:1235px;top:63px;width:24px;height:24px" viewBox="0 0 24 24"><path d="M1 6c0-5 22-5 22 0l-2 13c-1 4-17 4-18 0z" fill="#dedbd8" stroke="#d2cfcb" stroke-width=".6"/><ellipse cx="12" cy="6" rx="11" ry="3.500" fill="#e6e3e0"/><path d="M14 8c3-2 7-2.500 9-1.500l-1.500 9c-3 1-5 .5-6.500-1.500-1.500-2-2-4-1-6z" fill="#9a9894"/></svg><svg class="ic" style="left:1268px;top:63px;width:24px;height:24px" viewBox="0 0 24 24"><path d="M.5 3l23-2.500v16l-23 5z" fill="#b8b6b2"/><path d="M.5 3l5 1c1 4 .5 9-.5 13l-4.500 1zM8 3.500l4-.5c1.500 4 1 9 0 12.500l-4.500 1c1-4 1.500-9 .5-13zM15 2.500l3.500-.5c1.500 4 1 8 0 12l-4 1c1-4 1.500-8.500.5-12.500zM21 2l2.500-.5v12l-3 1c1-4 1.500-8.500.5-12.500z" fill="#8e8c88"/></svg><div class="grip" style="left:1305px;top:64px"></div><svg class="ic" style="left:1316px;top:63px;width:24px;height:24px" viewBox="0 0 24 24"><path d="M1.500 17.500l15.500-16 6 5.500-15.500 16z" fill="#f4c418" stroke="#8b8158" stroke-width="1"/><path d="M4.500 17l2 1.800M6.500 15l1.300 1.200M8.500 13l2 1.800M10.500 11l1.300 1.200M12.500 9l2 1.800M14.500 7l1.300 1.200M16.500 5l2 1.800" stroke="#7a6a28" stroke-width=".9"/></svg><div class="grip" style="left:1354px;top:64px"></div><svg class="ic" style="left:1365px;top:63px;width:24px;height:24px" viewBox="0 0 24 24"><path d="M8.500 1.500h9l3 3v13.500h-12z" fill="#fdfdfd" stroke="#77736d" stroke-width="1"/><path d="M5.500 4.500h9l3.500 3.500v13.500h-12.500z" fill="#fdfdfd" stroke="#77736d" stroke-width="1"/><path d="M14.500 4.500v3.500h3.500" fill="#ddd" stroke="#77736d" stroke-width=".8"/><circle cx="11.5" cy="14" r="5.2" fill="none" stroke="#e66" stroke-width=".9" stroke-dasharray="10.92 21.84"/><circle cx="11.5" cy="14" r="5.2" fill="none" stroke="#6c6" stroke-width=".9" stroke-dasharray="10.92 21.84" transform="rotate(120 11.5 14)"/><circle cx="11.5" cy="14" r="5.2" fill="none" stroke="#69e" stroke-width=".9" stroke-dasharray="10.92 21.84" transform="rotate(60 11.5 14)"/><circle cx="11.5" cy="14" r="3" fill="none" stroke="#f0a070" stroke-width=".8"/><circle cx="11.5" cy="14" r="1.200" fill="#aaa"/></svg><div class="t " style="left:1.5px;top:97px;font-size:13px;letter-spacing:0.12px;">Pipeline Browser</div><svg class="a" style="left:585px;top:99px;width:26px;height:12px" viewBox="0 0 26 12"><rect x="0.5" y="0.5" width="10" height="10" rx="2" fill="#efebe7" stroke="#6a6660"/><rect x="4.5" y="2.5" width="4" height="4" fill="none" stroke="#6a6660"/><rect x="2.5" y="4.5" width="4" height="4" fill="#efebe7" stroke="#6a6660"/><rect x="14.5" y="0.5" width="10" height="10" rx="2" fill="#efebe7" stroke="#6a6660"/><path d="M17 3l5 5M22 3l-5 5" stroke="#3a3835" stroke-width="1.8"/></svg><div class="box" style="left:-1px;top:115px;width:613px;height:203px;border-color:#aba59e"></div><div class="sbv" style="left:596px;top:116px;width:15px;height:201px;border-width:0 0 0 1px"></div><div class="au" style="left:600px;top:120px"></div><div class="ad" style="left:600px;top:307px"></div><div class="thumb" style="left:597px;top:128px;width:14px;height:34px"></div><div class="a" style="left:27px;top:116px;width:1px;height:201px;background:#8a8680"></div><div class="a" style="left:18px;top:207px;width:127px;height:18px;background:#308cc6"></div><div class="a" style="left:45px;top:160px;width:1px;height:144px;background:#8a8680"></div><div class="a" style="left:63px;top:204px;width:1px;height:78px;background:#8a8680"></div><div class="a" style="left:27px;top:150px;width:9px;height:1px;background:#8a8680"></div><div class="a" style="left:45px;top:172px;width:10px;height:1px;background:#8a8680"></div><div class="a" style="left:45px;top:194px;width:10px;height:1px;background:#8a8680"></div><div class="a" style="left:63px;top:216px;width:10px;height:1px;background:#8a8680"></div><div class="a" style="left:63px;top:238px;width:10px;height:1px;background:#8a8680"></div><div class="a" style="left:63px;top:260px;width:10px;height:1px;background:#8a8680"></div><div class="a" style="left:63px;top:282px;width:10px;height:1px;background:#8a8680"></div><div class="a" style="left:45px;top:304px;width:10px;height:1px;background:#8a8680"></div><svg class="a" style="left:23px;top:146px;width:9px;height:9px" viewBox="0 0 9 9"><rect x="0.5" y="0.5" width="8" height="8" fill="#fff" stroke="#77736d"/><path d="M2 4.5h5" stroke="#222"/></svg><svg class="a" style="left:41px;top:168px;width:9px;height:9px" viewBox="0 0 9 9"><rect x="0.5" y="0.5" width="8" height="8" fill="#fff" stroke="#77736d"/><path d="M2 4.5h5" stroke="#222"/><path d="M4.5 2v5" stroke="#222"/></svg><svg class="a" style="left:41px;top:190px;width:9px;height:9px" viewBox="0 0 9 9"><rect x="0.5" y="0.5" width="8" height="8" fill="#fff" stroke="#77736d"/><path d="M2 4.5h5" stroke="#222"/></svg><svg class="a" style="left:41px;top:300px;width:9px;height:9px" viewBox="0 0 9 9"><rect x="0.5" y="0.5" width="8" height="8" fill="#fff" stroke="#77736d"/><path d="M2 4.5h5" stroke="#222"/><path d="M4.5 2v5" stroke="#222"/></svg><div class="t " style="left:38px;top:120px;font-size:13px;letter-spacing:0.50px;">builtin:</div><div class="t " style="left:56px;top:142px;font-size:13px;letter-spacing:0.30px;">axial-fan-stage.tcae</div><div class="t " style="left:74px;top:164px;font-size:13px;letter-spacing:-0.40px;">TMESH1</div><div class="t " style="left:74px;top:186px;font-size:13px;letter-spacing:-0.40px;">TCFD1</div><div class="t " style="left:92px;top:208px;color:#fff;font-size:13px;letter-spacing:0.28px;">Settings</div><div class="t " style="left:92px;top:230px;font-size:13px;letter-spacing:0.13px;">Report</div><div class="t " style="left:92px;top:252px;font-size:13px;letter-spacing:0.32px;">Quantities</div><div class="t " style="left:92px;top:274px;font-size:13px;letter-spacing:-0.02px;">Residuals</div><div class="t " style="left:74px;top:296px;font-size:13px;letter-spacing:-0.40px;">TFEA1</div><svg class="a" style="left:19px;top:119px;width:16px;height:16px" viewBox="0 0 16 16"><defs><linearGradient id="tsv" x1="0" y1="0" x2="0" y2="1"><stop offset="0" stop-color="#9a9a9a"/><stop offset=".35" stop-color="#777"/><stop offset="1" stop-color="#2a2a2a"/></linearGradient></defs><rect x="4.500" y="1.500" width="7" height="13.500" rx=".5" fill="url(#tsv)" stroke="#1a1a1a" stroke-width="1"/><rect x="6" y="3" width="4" height="2.200" fill="#eee"/><rect x="6" y="6.500" width="2.500" height="1.200" fill="#222"/></svg><svg class="a" style="left:37px;top:141px;width:16px;height:16px" viewBox="0 0 16 16"><circle cx="8" cy="8" r="6.800" fill="none" stroke="#f0a878" stroke-width=".9" stroke-dasharray="2 1.500"/><circle cx="8" cy="8" r="4.5" fill="none" stroke="#e8605a" stroke-width="0.9" stroke-dasharray="8.1 20.1735" transform="rotate(-150 8 8)"/><circle cx="8" cy="8" r="4.5" fill="none" stroke="#58b858" stroke-width="0.9" stroke-dasharray="8.1 20.1735" transform="rotate(-30 8 8)"/><circle cx="8" cy="8" r="4.5" fill="none" stroke="#5a90e0" stroke-width="0.9" stroke-dasharray="8.1 20.1735" transform="rotate(90 8 8)"/><circle cx="8" cy="8" r="1.500" fill="none" stroke="#999" stroke-width=".8"/></svg><svg class="a" style="left:55px;top:163px;width:16px;height:16px" viewBox="0 0 16 16"><circle cx="2.5" cy="3" r="1.900" fill="none" stroke="#e05a50" stroke-width=".9"/><circle cx="6.2" cy="3" r="1.900" fill="none" stroke="#e05a50" stroke-width=".9"/><circle cx="9.9" cy="3" r="1.900" fill="none" stroke="#e05a50" stroke-width=".9"/><circle cx="13.6" cy="3" r="1.900" fill="none" stroke="#e05a50" stroke-width=".9"/><circle cx="2.5" cy="6.7" r="1.900" fill="none" stroke="#e8806a" stroke-width=".9"/><circle cx="6.2" cy="6.7" r="1.900" fill="none" stroke="#e8806a" stroke-width=".9"/><circle cx="9.9" cy="6.7" r="1.900" fill="none" stroke="#e8806a" stroke-width=".9"/><circle cx="13.6" cy="6.7" r="1.900" fill="none" stroke="#e8806a" stroke-width=".9"/><circle cx="2.5" cy="10.4" r="1.900" fill="none" stroke="#58b868" stroke-width=".9"/><circle cx="6.2" cy="10.4" r="1.900" fill="none" stroke="#58b868" stroke-width=".9"/><circle cx="9.9" cy="10.4" r="1.900" fill="none" stroke="#58b868" stroke-width=".9"/><circle cx="13.6" cy="10.4" r="1.900" fill="none" stroke="#58b868" stroke-width=".9"/><circle cx="2.5" cy="13.5" r="1.900" fill="none" stroke="#5a90e0" stroke-width=".9"/><circle cx="6.2" cy="13.5" r="1.900" fill="none" stroke="#5a90e0" stroke-width=".9"/><circle cx="9.9" cy="13.5" r="1.900" fill="none" stroke="#5a90e0" stroke-width=".9"/><circle cx="13.6" cy="13.5" r="1.900" fill="none" stroke="#5a90e0" stroke-width=".9"/></svg><svg class="a" style="left:55px;top:185px;width:16px;height:16px" viewBox="0 0 16 16"><circle cx="8" cy="8" r="7.600" fill="none" stroke="#f0a878" stroke-width=".9"/><circle cx="8" cy="8" r="5.6" fill="none" stroke="#e8605a" stroke-width="0.9" stroke-dasharray="10.08 25.1048" transform="rotate(-150 8 8)"/><circle cx="8" cy="8" r="5.6" fill="none" stroke="#58b858" stroke-width="0.9" stroke-dasharray="10.08 25.1048" transform="rotate(-30 8 8)"/><circle cx="8" cy="8" r="5.6" fill="none" stroke="#5a90e0" stroke-width="0.9" stroke-dasharray="10.08 25.1048" transform="rotate(90 8 8)"/><circle cx="8" cy="8" r="3.4" fill="none" stroke="#e8605a" stroke-width="0.8" stroke-dasharray="6.12 15.2422" transform="rotate(-150 8 8)"/><circle cx="8" cy="8" r="3.4" fill="none" stroke="#58b858" stroke-width="0.8" stroke-dasharray="6.12 15.2422" transform="rotate(-30 8 8)"/><circle cx="8" cy="8" r="3.4" fill="none" stroke="#5a90e0" stroke-width="0.8" stroke-dasharray="6.12 15.2422" transform="rotate(90 8 8)"/><circle cx="8" cy="8" r="1" fill="#888"/></svg><svg class="a" style="left:73px;top:207px;width:16px;height:16px" viewBox="0 0 16 16"><g opacity=".55"><circle cx="8" cy="8" r="7.600" fill="none" stroke="#f0a878" stroke-width=".9"/><circle cx="8" cy="8" r="5.6" fill="none" stroke="#e8605a" stroke-width="0.9" stroke-dasharray="10.08 25.1048" transform="rotate(-150 8 8)"/><circle cx="8" cy="8" r="5.6" fill="none" stroke="#58b858" stroke-width="0.9" stroke-dasharray="10.08 25.1048" transform="rotate(-30 8 8)"/><circle cx="8" cy="8" r="5.6" fill="none" stroke="#5a90e0" stroke-width="0.9" stroke-dasharray="10.08 25.1048" transform="rotate(90 8 8)"/><circle cx="8" cy="8" r="3.4" fill="none" stroke="#e8605a" stroke-width="0.8" stroke-dasharray="6.12 15.2422" transform="rotate(-150 8 8)"/><circle cx="8" cy="8" r="3.4" fill="none" stroke="#58b858" stroke-width="0.8" stroke-dasharray="6.12 15.2422" transform="rotate(-30 8 8)"/><circle cx="8" cy="8" r="3.4" fill="none" stroke="#5a90e0" stroke-width="0.8" stroke-dasharray="6.12 15.2422" transform="rotate(90 8 8)"/><circle cx="8" cy="8" r="1" fill="#888"/></g></svg><svg class="a" style="left:73px;top:229px;width:16px;height:16px" viewBox="0 0 16 16"><path d="M1.500 1v14h14" fill="none" stroke="#666" stroke-width="1"/><rect x="2.500" y="9" width="3" height="6" fill="#2a7cd0"/><rect x="5.500" y="4" width="3" height="11" fill="#48a838"/><rect x="8.500" y="1" width="3" height="14" fill="#48a838" opacity=".85"/><rect x="8.500" y="7" width="3" height="8" fill="#f0c020"/><rect x="11.500" y="10" width="3" height="5" fill="#e03a28"/></svg><svg class="a" style="left:73px;top:251px;width:16px;height:16px" viewBox="0 0 16 16"><path d="M1.500 1v14h14" fill="none" stroke="#555" stroke-width="1"/><path d="M2.500 12l2-4 1.500 3 2-6 1.500 5 1.500-3 1.500 2 1.500-4" fill="none" stroke="#2a7cd0" stroke-width="1.200"/></svg><svg class="a" style="left:73px;top:273px;width:16px;height:16px" viewBox="0 0 16 16"><path d="M1.500 1v14h14" fill="none" stroke="#555" stroke-width="1"/><path d="M2.500 12l2-4 1.500 3 2-6 1.500 5 1.500-3 1.500 2 1.500-4" fill="none" stroke="#2a7cd0" stroke-width="1.200"/></svg><svg class="a" style="left:55px;top:295px;width:16px;height:16px" viewBox="0 0 16 16"><circle cx="8" cy="8" r="2" fill="#d8d8d8" stroke="#bbb" stroke-width=".6"/><circle cx="8" cy="1.5" r="1.200" fill="#e03a28"/><circle cx="13.5" cy="4.5" r="1.200" fill="#48a838"/><circle cx="13.5" cy="11.5" r="1.200" fill="#48a838"/><circle cx="8" cy="14.5" r="1.200" fill="#2a7cd0"/><circle cx="2.5" cy="11.5" r="1.200" fill="#e8803a"/><circle cx="2.5" cy="4.5" r="1.200" fill="#e8803a"/></svg><div class="a" style="left:298px;top:320px;width:16px;height:1px;background-image:linear-gradient(90deg,#aaa 1px,transparent 1px);background-size:3px 1px"></div><div class="hl" style="left:0;top:348px;width:612px;background:#b9b3ac"></div><div class="tab" style="left:84px;top:326px;width:51px;height:22px;line-height:21px;font-size:13px;letter-spacing:0.13px;">View</div><div class="tab" style="left:135px;top:326px;width:69px;height:22px;line-height:21px;font-size:13px;letter-spacing:0.23px;">Display</div><div class="tab" style="left:204px;top:326px;width:94px;height:22px;line-height:21px;font-size:13px;letter-spacing:0.40px;">Information</div><div class="tab" style="left:298px;top:326px;width:150px;height:22px;line-height:21px;font-size:13px;letter-spacing:0.29px;">Multi-block Inspector</div><div class="tab sel" style="left:-1px;top:324px;width:84px;height:25px;line-height:23px;padding-left:9px;text-align:left;font-size:13px;letter-spacing:0.14px;">Properties</div><div class="t " style="left:1.5px;top:352px;font-size:13px;letter-spacing:0.14px;">Properties</div><svg class="a" style="left:585px;top:354px;width:26px;height:12px" viewBox="0 0 26 12"><rect x="0.5" y="0.5" width="10" height="10" rx="2" fill="#efebe7" stroke="#6a6660"/><rect x="4.5" y="2.5" width="4" height="4" fill="none" stroke="#6a6660"/><rect x="2.5" y="4.5" width="4" height="4" fill="#efebe7" stroke="#6a6660"/><rect x="14.5" y="0.5" width="10" height="10" rx="2" fill="#efebe7" stroke="#6a6660"/><path d="M17 3l5 5M22 3l-5 5" stroke="#3a3835" stroke-width="1.8"/></svg><div class="btn" style="left:6px;top:378px;width:148px;height:24px;line-height:22px;background:linear-gradient(#c4ecc0,#9ed69c);border-color:#2a6f9e;font-size:13px;letter-spacing:0.27px;"><span style="padding-left:17px">Apply</span></div><div class="btn" style="left:156px;top:378px;width:148px;height:24px;line-height:22px;font-size:13px;letter-spacing:-0.09px;"><span style="padding-left:17px">Reset</span></div><div class="btn" style="left:306px;top:378px;width:147px;height:24px;line-height:22px;font-size:13px;letter-spacing:0.31px;"><span style="padding-left:17px">Delete</span></div><div class="btn nofit" style="left:455px;top:378px;width:148px;height:24px;line-height:22px;font-size:15px;font-weight:bold;color:#8cbf6a">?</div><svg class="a" style="left:54px;top:383px;width:14px;height:14px" viewBox="0 0 14 14"><path d="M2 6l4-2 3 1v6l-4 2-3-1z" fill="#a9b0a4" stroke="#7c8578" stroke-width=".8"/><path d="M7 4l4-3M8 1h3.5v3.500" fill="none" stroke="#7dbb6a" stroke-width="1.6"/></svg><svg class="a" style="left:205px;top:383px;width:14px;height:14px" viewBox="0 0 14 14"><circle cx="7" cy="7" r="5.6" fill="none" stroke="#d0282e" stroke-width="1.8"/><path d="M3.200 10.800l7.600-7.600" stroke="#d0282e" stroke-width="1.800"/></svg><svg class="a" style="left:352px;top:385px;width:11px;height:11px" viewBox="0 0 11 11"><path d="M1.500 1.500l8 8M9.500 1.500l-8 8" stroke="#dc2626" stroke-width="3.200"/></svg><div class="inp" style="left:6px;top:408px;width:571px;height:22px;line-height:20px;color:#9a9690;padding-left:2px;font-size:13px;letter-spacing:0.20px;">Search ... (use Esc to clear text)</div><div class="btn" style="left:579px;top:408px;width:24px;height:23px;background:linear-gradient(#e2dfdb,#d9d5d0);"></div><svg class="a" style="left:583px;top:411.500px;width:16px;height:16px" viewBox="0 0 16 16"><circle cx="8" cy="8" r="5.600" fill="none" stroke="#b4b0aa" stroke-width="2.400" stroke-dasharray="2.200 2.200"/><circle cx="8" cy="8" r="4.300" fill="#dcd9d4" stroke="#b4b0aa" stroke-width="1.300"/><circle cx="8" cy="8" r="1.900" fill="none" stroke="#b4b0aa" stroke-width="1.100"/></svg><div class="hl" style="left:82px;top:437px;width:47px;background:#b3ada6"></div><div class="hl" style="left:209px;top:437px;width:47px;background:#b3ada6"></div><div class="hl" style="left:336px;top:437px;width:47px;background:#b3ada6"></div><div class="hl" style="left:463px;top:437px;width:47px;background:#b3ada6"></div><div class="sbv" style="left:589px;top:437px;width:15px;height:624px;border-width:0 0 0 1px;border-color:#c9c4bd"></div><div class="au" style="left:593px;top:441px"></div><div class="ad" style="left:593px;top:1052px"></div><div class="a" style="left:590px;top:450px;width:14px;height:19px;background:#e1deda"></div><div class="a" style="left:590px;top:986px;width:14px;height:60px;background:#e3e0dc"></div><div class="ylw" style="top:444px"><div class="minus" style="top:9px"></div><div class="t b" style=";font-size:13px;letter-spacing:-0.16px;">GENERAL</div></div><div class="t " style="left:6px;top:471px;font-size:13px;letter-spacing:0.38px;">Simulation type</div><div class="cmb" style="left:105px;top:472px;width:484px;height:22px;font-size:13px;letter-spacing:0.37px;">fan</div><div class="ylw" style="top:498px"><div class="minus" style="top:9px"></div><div class="t b" style=";font-size:13px;letter-spacing:0.18px;">PHYSICS</div></div><div class="grp" style="top:530px"><div class="plus"></div><div class="t b" style=";font-size:13px;letter-spacing:0.81px;">Time management</div></div><div class="grp" style="top:558px"><div class="minus"></div><div class="t b" style=";font-size:13px;letter-spacing:0.63px;">Fluid properties</div></div><div class="t " style="left:16px;top:587px;font-size:13px;letter-spacing:0.18px;">Physical model</div><div class="cmb" style="left:136px;top:588px;width:453px;height:22px;font-size:13px;letter-spacing:0.23px;">Incompressible</div><div class="t " style="left:16px;top:613px;font-size:13px;letter-spacing:0.23px;">Fluid name</div><div class="cmb" style="left:136px;top:614px;width:453px;height:22px;font-size:13px;letter-spacing:0.39px;">air</div><div class="chk" style="left:16px;top:643px"></div><div class="t " style="left:35px;top:642px;font-size:13px;letter-spacing:0.27px;">Use fluid defaults</div><div class="t " style="left:16px;top:663px;font-size:13px;letter-spacing:0.32px;">Dynamic viscosity</div><div class="inp" style="left:136px;top:664px;width:396px;height:22px;padding-left:3px;font-size:13px;letter-spacing:0.28px;">1.8e-05</div><div class="cmb" style="left:536px;top:664px;width:53px;height:22px;padding-left:4px;font-size:13px;letter-spacing:-0.40px;">Pa.s</div><div class="t " style="left:16px;top:689px;font-size:13px;letter-spacing:0.20px;">Reference density</div><div class="inp" style="left:136px;top:690px;width:371px;height:22px;padding-left:3px;font-size:13px;letter-spacing:0.34px;">1.2</div><div class="cmb" style="left:511px;top:690px;width:78px;height:22px;padding-left:4px;font-size:13px;letter-spacing:1.08px;">kg/m^3</div><div class="t " style="left:16px;top:715px;font-size:13px;letter-spacing:0.11px;">Reference pressure</div><div class="inp" style="left:136px;top:716px;width:388px;height:22px;padding-left:3px;font-size:13px;letter-spacing:0.40px;">1</div><div class="cmb" style="left:528px;top:716px;width:61px;height:22px;padding-left:4px;font-size:13px;letter-spacing:0.69px;">atm</div><div class="grp" style="top:742px"><div class="plus"></div><div class="t b" style=";font-size:13px;letter-spacing:0.52px;">Multiphysics</div></div><div class="grp" style="top:770px"><div class="plus"></div><div class="t b" style=";font-size:13px;letter-spacing:0.54px;">Turbulence</div></div><div class="grp" style="top:798px"><div class="plus"></div><div class="t b" style=";font-size:13px;letter-spacing:0.70px;">Rotation reference frames</div></div><div class="ylw" style="top:826px"><div class="minus" style="top:9px"></div><div class="t b" style=";font-size:13px;letter-spacing:0.38px;">SIMULATION</div></div><div class="grp" style="top:858px"><div class="plus"></div><div class="t b" style=";font-size:13px;letter-spacing:0.52px;">Solver</div></div><div class="grp" style="top:886px"><div class="plus"></div><div class="t b" style=";font-size:13px;letter-spacing:0.41px;">Controls</div></div><div class="grp" style="top:914px"><div class="plus"></div><div class="t b" style=";font-size:13px;letter-spacing:0.56px;">Scripting</div></div><div class="ylw" style="top:942px"><div class="minus" style="top:9px"></div><div class="t b" style=";font-size:13px;letter-spacing:0.28px;">BOUNDARY CONDITIONS</div></div><div class="grp" style="top:974px"><div class="plus"></div><div class="t b" style=";font-size:13px;letter-spacing:0.85px;">Inlet</div></div><div class="grp" style="top:1002px"><div class="plus"></div><div class="t b" style=";font-size:13px;letter-spacing:0.82px;">Outlet</div></div><div class="grp" style="top:1030px"><div class="plus"></div><div class="t b" style=";font-size:13px;letter-spacing:0.56px;">Walls</div></div><div class="hl" style="left:16px;top:1058px;width:573px;background:#b3ada6"></div><div class="a" style="left:614px;top:575px;width:1px;height:16px;background-image:linear-gradient(#aaa 1px,transparent 1px);background-size:1px 3px"></div><div class="hl" style="left:618px;top:119px;width:1386px;background:#b0aba5"></div><div class="vl" style="left:618px;top:119px;height:810px;background:#b0aba5"></div><div class="vl" style="left:2003px;top:119px;height:810px;background:#b0aba5"></div><div class="tab " style="left:735px;top:98px;width:116px;height:21px"><div class="a" style="left:10px;top:6px;width:9px;height:8px;border:1px solid #222;border-top-width:2px;background:#fff"></div><div class="t" style="left:24px;top:2px;font-size:13px;letter-spacing:0.58px;">Layout #2</div><svg class="a" style="left:90px;top:5px;width:11px;height:11px" viewBox="0 0 11 11"><rect x=".5" y=".5" width="10" height="10" rx="2" fill="none" stroke="#77736d"/><path d="M3 3l5 5M8 3l-5 5" stroke="#3a3835" stroke-width="1.600"/></svg></div><div class="tab " style="left:851px;top:98px;width:116px;height:21px"><div class="a" style="left:10px;top:6px;width:9px;height:8px;border:1px solid #222;border-top-width:2px;background:#fff"></div><div class="t" style="left:24px;top:2px;font-size:13px;letter-spacing:0.58px;">Layout #3</div><svg class="a" style="left:90px;top:5px;width:11px;height:11px" viewBox="0 0 11 11"><rect x=".5" y=".5" width="10" height="10" rx="2" fill="none" stroke="#77736d"/><path d="M3 3l5 5M8 3l-5 5" stroke="#3a3835" stroke-width="1.600"/></svg></div><div class="tab " style="left:967px;top:98px;width:116px;height:21px"><div class="a" style="left:10px;top:6px;width:9px;height:8px;border:1px solid #222;border-top-width:2px;background:#fff"></div><div class="t" style="left:24px;top:2px;font-size:13px;letter-spacing:0.58px;">Layout #4</div><svg class="a" style="left:90px;top:5px;width:11px;height:11px" viewBox="0 0 11 11"><rect x=".5" y=".5" width="10" height="10" rx="2" fill="none" stroke="#77736d"/><path d="M3 3l5 5M8 3l-5 5" stroke="#3a3835" stroke-width="1.600"/></svg></div><div class="tab sel" style="left:619px;top:95px;width:116px;height:25px"><div class="a" style="left:10px;top:7px;width:9px;height:8px;border:1px solid #222;border-top-width:2px;background:#fff"></div><div class="t" style="left:24px;top:3px;font-size:13px;letter-spacing:0.58px;">Layout #1</div><svg class="a" style="left:90px;top:6px;width:11px;height:11px" viewBox="0 0 11 11"><rect x=".5" y=".5" width="10" height="10" rx="2" fill="none" stroke="#77736d"/><path d="M3 3l5 5M8 3l-5 5" stroke="#3a3835" stroke-width="1.600"/></svg></div><div class="tab nofit" style="left:1083px;top:98px;width:33px;height:21px;line-height:19px;font-size:15px">+</div><svg class="a" style="left:623px;top:124px;width:18px;height:18px" viewBox="0 0 18 18"><g opacity="1"><rect x="1.5" y="3" width="14" height="10.5" rx="1.500" fill="#cbcbc9" stroke="#a0a09e" stroke-width=".8"/><rect x="6" y="1.8" width="5" height="1.600" fill="#a0a09e"/><circle cx="8.5" cy="8.55" r="3.600" fill="#cfe6f8" stroke="#8f8f8d" stroke-width="1.400"/><circle cx="3.1" cy="4.6" r=".7" fill="#e55"/></g><path d="M1.500 15l1.500-4.500 1.300 1.500c3-2 6.500-.5 5.500 4l-1.500.8c.8-3-1-4.200-3-3.200l1 1.500z" fill="#ee1c24" stroke="#b03038" stroke-width=".5"/></svg><svg class="a" style="left:650px;top:124px;width:18px;height:18px" viewBox="0 0 18 18"><g opacity=".55"><g opacity="1"><rect x="1.5" y="3" width="14" height="10.5" rx="1.500" fill="#cbcbc9" stroke="#a0a09e" stroke-width=".8"/><rect x="6" y="1.8" width="5" height="1.600" fill="#a0a09e"/><circle cx="8.5" cy="8.55" r="3.600" fill="#cfe6f8" stroke="#8f8f8d" stroke-width="1.400"/><circle cx="3.1" cy="4.6" r=".7" fill="#e55"/></g><g transform="translate(19,1) scale(-1,1)"><path d="M1.500 15l1.500-4.500 1.300 1.500c3-2 6.500-.5 5.500 4l-1.500.8c.8-3-1-4.200-3-3.200l1 1.500z" fill="#c9c6c1" stroke="#aaa" stroke-width=".5"/></g></g></svg><svg class="a" style="left:682px;top:124px;width:18px;height:18px" viewBox="0 0 18 18"><g opacity="1"><rect x="2" y="3.5" width="14" height="10.5" rx="1.500" fill="#cbcbc9" stroke="#a0a09e" stroke-width=".8"/><rect x="6.5" y="2.3" width="5" height="1.600" fill="#a0a09e"/><circle cx="9" cy="9.05" r="3.600" fill="#cfe6f8" stroke="#8f8f8d" stroke-width="1.400"/><circle cx="3.6" cy="5.1" r=".7" fill="#e55"/></g><path d="M.8 4v-3h3M14.200 1h3v3M17.200 14.500v3h-3M3.800 17.500h-3v-3" fill="none" stroke="#8f8f8d" stroke-width="1"/></svg><svg class="a" style="left:714px;top:124px;width:18px;height:18px" viewBox="0 0 18 18"><text x="2" y="13.500" font-family="Liberation Sans" font-weight="bold" font-size="11.500" fill="#6f7058" letter-spacing="-.3">3D</text></svg><svg class="a" style="left:740px;top:124px;width:18px;height:18px" viewBox="0 0 18 18"><g opacity="1"><rect x="1" y="2.5" width="14" height="10.5" rx="1.500" fill="#cbcbc9" stroke="#a0a09e" stroke-width=".8"/><rect x="5.5" y="1.3" width="5" height="1.600" fill="#a0a09e"/><circle cx="8" cy="8.05" r="3.600" fill="#cfe6f8" stroke="#8f8f8d" stroke-width="1.400"/><circle cx="2.6" cy="4.1" r=".7" fill="#e55"/></g><path d="M8.500 8.500l7 7" stroke="#8b8158" stroke-width="3.200" stroke-linecap="round"/><path d="M8.500 8.500l6.500 6.500" stroke="#e8b830" stroke-width="2" stroke-linecap="round"/><circle cx="8" cy="8" r="2.600" fill="#e8f4fc" stroke="#8f8f8d" stroke-width="1"/></svg><svg class="a" style="left:772px;top:124px;width:18px;height:18px" viewBox="0 0 18 18"><rect x="1.500" y="1.500" width="15" height="15" fill="none" stroke="#8f8b85" stroke-width="1" stroke-dasharray="3 2"/><path d="M9 5v8M5 9h8" stroke="#7e9572" stroke-width="3.600"/><path d="M9 5.600v6.800M5.600 9h6.800" stroke="#a6d990" stroke-width="2.200"/></svg><svg class="a" style="left:798px;top:124px;width:18px;height:18px" viewBox="0 0 18 18"><rect x="1.500" y="1.500" width="15" height="15" fill="none" stroke="#8f8b85" stroke-width="1" stroke-dasharray="3 2"/><path d="M5.500 9h7" stroke="#e0262a" stroke-width="2.600" stroke-linecap="round"/></svg><svg class="a" style="left:824px;top:124px;width:18px;height:18px" viewBox="0 0 18 18"><rect x="1.500" y="1.500" width="15" height="15" fill="none" stroke="#8f8b85" stroke-width="1" stroke-dasharray="3 2"/><path d="M7.500 3v6M4.500 6h6" stroke="#7e9572" stroke-width="3"/><path d="M7.500 3.500v5M5 6h5" stroke="#a6d990" stroke-width="1.700"/><path d="M4.500 12.500h6" stroke="#e0262a" stroke-width="2.200"/><path d="M11.5 11l4.500 4.200-1.600.2 1.500 2-1 .8-1.500-2-1 1.300z" fill="#77736d"/></svg><svg class="a" style="left:856px;top:124px;width:18px;height:18px" viewBox="0 0 18 18"><rect x="1.500" y="1.500" width="15" height="15" fill="none" stroke="#8f8b85" stroke-width="1" stroke-dasharray="3 2"/><path d="M8.500 4l5 9h-10z" fill="#a6d990" stroke="#7e9572" stroke-width=".8"/><path d="M11.5 10.5l4.500 4.200-1.600.2 1.500 2-1 .8-1.500-2-1 1.300z" fill="#77736d"/></svg><svg class="a" style="left:882px;top:124px;width:18px;height:18px" viewBox="0 0 18 18"><rect x="1.500" y="1.500" width="15" height="15" fill="none" stroke="#8f8b85" stroke-width="1" stroke-dasharray="3 2"/><path d="M8.500 3.500l4.500 8.500h-9z" fill="none" stroke="#bbb" stroke-width=".8"/><circle cx="8.500" cy="3.500" r="1.300" fill="#c84030"/><circle cx="4" cy="12" r="1.300" fill="#c84030"/><path d="M11.5 10.5l4.500 4.200-1.600.2 1.500 2-1 .8-1.500-2-1 1.300z" fill="#77736d"/></svg><svg class="a" style="left:909px;top:124px;width:18px;height:18px" viewBox="0 0 18 18"><path d="M1 2h10M1 2v12h7" fill="none" stroke="#aaa" stroke-width=".8" stroke-dasharray="2 1.500"/><path d="M3.500 6.500l6-3.500 6 1.500v6l-5.500 1h-6.500z" fill="#a6d990" stroke="#6aa050" stroke-width="1"/><path d="M3.500 6.500l6.500 1 5.500-3M10 7.500v4" fill="none" stroke="#6aa050" stroke-width=".8"/><path d="M9.5 12l4.500 4.200-1.600.2 1.500 2-1 .8-1.500-2-1 1.300z" fill="#77736d"/></svg><svg class="a" style="left:935px;top:124px;width:18px;height:18px" viewBox="0 0 18 18"><path d="M1.500 4l8-2.500 6.500 1.500v9l-8 2.500-6.500-1.500z" fill="none" stroke="#aaa" stroke-width=".8" stroke-dasharray="1.500 1.300"/><path d="M8 5.500v9.500M1.500 4l6.500 1.500 8-2.500" fill="none" stroke="#bbb" stroke-width=".7" stroke-dasharray="1.500 1.300"/><circle cx="9.5" cy="1.5" r="1" fill="#e0463a"/><circle cx="16" cy="3" r="1" fill="#e0463a"/><circle cx="3" cy="7" r="1" fill="#e0463a"/><circle cx="6" cy="8" r="1" fill="#e0463a"/><circle cx="3" cy="12" r="1" fill="#e0463a"/><circle cx="6" cy="13" r="1" fill="#e0463a"/><circle cx="16" cy="12" r="1" fill="#e0463a"/><path d="M9.5 12.5l4.500 4.200-1.600.2 1.500 2-1 .8-1.500-2-1 1.300z" fill="#77736d"/></svg><svg class="a" style="left:961px;top:124px;width:18px;height:18px" viewBox="0 0 18 18"><path d="M1.500 2l14 .5-3 5 4.500 4.500-5.500 4.500-8-2.500z" fill="none" stroke="#999" stroke-width=".9" stroke-dasharray="2.500 1.800"/><path d="M3 10l6-4v8z" fill="#a6d990" stroke="#7e9572" stroke-width=".8"/></svg><svg class="a" style="left:987px;top:124px;width:18px;height:18px" viewBox="0 0 18 18"><path d="M1.500 2l14 .5-3 5 4.500 4.500-5.500 4.500-8-2.500z" fill="none" stroke="#999" stroke-width=".9" stroke-dasharray="2.500 1.800"/><circle cx="4.5" cy="5.5" r="1.300" fill="#c04030"/><circle cx="11.5" cy="5.5" r="1.300" fill="#c04030"/><circle cx="8" cy="8" r="1.300" fill="#c04030"/><circle cx="4.5" cy="10.5" r="1.300" fill="#c04030"/><circle cx="8.5" cy="12.5" r="1.300" fill="#c04030"/><circle cx="12.5" cy="14" r="1.300" fill="#c04030"/></svg><svg class="a" style="left:1013px;top:124px;width:18px;height:18px" viewBox="0 0 18 18"><rect x="1.500" y="1.500" width="15" height="15" fill="none" stroke="#8f8b85" stroke-width="1" stroke-dasharray="3 2"/><circle cx="5.500" cy="6" r="2.300" fill="#2c8cd0"/><circle cx="5.500" cy="13" r="2.300" fill="#2c8cd0"/><circle cx="12" cy="10" r="2.800" fill="#a6d990" stroke="#7e9572" stroke-width=".8"/><path d="M13.500 12l3 3.500" stroke="#77736d" stroke-width="1.800"/></svg><svg class="a" style="left:1040px;top:124px;width:18px;height:18px" viewBox="0 0 18 18"><circle cx="6" cy="7" r="2.300" fill="#d6d3cf" stroke="#bbb" stroke-width=".8" stroke-dasharray="1 1"/><path d="M9 9.5l4.500 4.200-1.600.2 1.500 2-1 .8-1.500-2-1 1.300z" fill="#bbb7b2"/></svg><svg class="a" style="left:1066px;top:124px;width:18px;height:18px" viewBox="0 0 18 18"><path d="M2 6l4.500-3.500h9.500v9l-4.500 4h-9.500z" fill="#d3d0cc" stroke="#bab7b2" stroke-width="1"/><path d="M2 6h9.500v9.500M11.500 6l4.500-3.500" fill="none" stroke="#bab7b2" stroke-width="1"/><path d="M11.5 10.5l4.500 4.200-1.600.2 1.500 2-1 .8-1.500-2-1 1.300z" fill="#bbb7b2"/></svg><svg class="a" style="left:1092px;top:124px;width:18px;height:18px" viewBox="0 0 18 18"><path d="M8.500 3.500l5.500 9.500h-11z" fill="#a6d990" stroke="#7e9572" stroke-width=".8"/><path d="M11.5 10.5l4.500 4.200-1.600.2 1.500 2-1 .8-1.500-2-1 1.300z" fill="#77736d"/></svg><div class="vl" style="left:675px;top:126px;height:14px;background:#d0cbc5"></div><div class="vl" style="left:707px;top:126px;height:14px;background:#d0cbc5"></div><div class="vl" style="left:765px;top:126px;height:14px;background:#d0cbc5"></div><div class="vl" style="left:849px;top:126px;height:14px;background:#d0cbc5"></div><div class="t nofit" style="left:1125px;top:125px;font-size:13px;font-weight:bold;letter-spacing:-1px;color:#111">&raquo;</div><div class="t " style="left:1137px;top:126px;font-weight:bold;font-size:13px;letter-spacing:0.72px;"><u>RenderView1</u></div><div class="vbtn" style="left:1237.5px;top:121px"></div><div class="vbtn" style="left:1264.5px;top:121px"></div><div class="vbtn" style="left:1291.5px;top:121px"></div><div class="vbtn" style="left:1318.5px;top:121px"></div><svg class="a" style="left:1244px;top:126px;width:14px;height:14px" viewBox="0 0 14 14"><rect x=".5" y=".5" width="13" height="13" fill="#ced6ed" stroke="#b4bcd6"/><path d="M7 .5v13" stroke="#a4a8b8" stroke-width="1.400"/></svg><svg class="a" style="left:1271px;top:126px;width:14px;height:14px" viewBox="0 0 14 14"><rect x=".5" y=".5" width="13" height="13" fill="#ced6ed" stroke="#b4bcd6"/><path d="M.5 7h13" stroke="#a4a8b8" stroke-width="1.400"/></svg><div class="a" style="left:1300px;top:128px;width:9px;height:9px;border:1px solid #111;border-top-width:2px;background:#fff"></div><svg class="a" style="left:1327px;top:128px;width:11px;height:11px" viewBox="0 0 11 11"><rect x=".5" y=".5" width="10" height="10" rx="2" fill="#f4f2ef" stroke="#77736d"/><path d="M3 3l5 5M8 3l-5 5" stroke="#5a5752" stroke-width="1.900"/></svg><svg class="a" style="left:623px;top:764px;width:18px;height:18px" viewBox="0 0 18 18"><g opacity="1"><rect x="1.5" y="3" width="14" height="10.5" rx="1.500" fill="#cbcbc9" stroke="#a0a09e" stroke-width=".8"/><rect x="6" y="1.8" width="5" height="1.600" fill="#a0a09e"/><circle cx="8.5" cy="8.55" r="3.600" fill="#cfe6f8" stroke="#8f8f8d" stroke-width="1.400"/><circle cx="3.1" cy="4.6" r=".7" fill="#e55"/></g><path d="M1.500 15l1.500-4.500 1.300 1.500c3-2 6.500-.5 5.500 4l-1.500.8c.8-3-1-4.200-3-3.200l1 1.500z" fill="#ee1c24" stroke="#b03038" stroke-width=".5"/></svg><svg class="a" style="left:650px;top:764px;width:18px;height:18px" viewBox="0 0 18 18"><g opacity=".55"><g opacity="1"><rect x="1.5" y="3" width="14" height="10.5" rx="1.500" fill="#cbcbc9" stroke="#a0a09e" stroke-width=".8"/><rect x="6" y="1.8" width="5" height="1.600" fill="#a0a09e"/><circle cx="8.5" cy="8.55" r="3.600" fill="#cfe6f8" stroke="#8f8f8d" stroke-width="1.400"/><circle cx="3.1" cy="4.6" r=".7" fill="#e55"/></g><g transform="translate(19,1) scale(-1,1)"><path d="M1.500 15l1.500-4.500 1.300 1.500c3-2 6.500-.5 5.500 4l-1.500.8c.8-3-1-4.200-3-3.200l1 1.500z" fill="#c9c6c1" stroke="#aaa" stroke-width=".5"/></g></g></svg><svg class="a" style="left:682px;top:764px;width:18px;height:18px" viewBox="0 0 18 18"><g opacity="1"><rect x="2" y="3.5" width="14" height="10.5" rx="1.500" fill="#cbcbc9" stroke="#a0a09e" stroke-width=".8"/><rect x="6.5" y="2.3" width="5" height="1.600" fill="#a0a09e"/><circle cx="9" cy="9.05" r="3.600" fill="#cfe6f8" stroke="#8f8f8d" stroke-width="1.400"/><circle cx="3.6" cy="5.1" r=".7" fill="#e55"/></g><path d="M.8 4v-3h3M14.200 1h3v3M17.200 14.500v3h-3M3.800 17.500h-3v-3" fill="none" stroke="#8f8f8d" stroke-width="1"/></svg><svg class="a" style="left:714px;top:764px;width:18px;height:18px" viewBox="0 0 18 18"><text x="2" y="13.500" font-family="Liberation Sans" font-weight="bold" font-size="11.500" fill="#6f7058" letter-spacing="-.3">3D</text></svg><svg class="a" style="left:740px;top:764px;width:18px;height:18px" viewBox="0 0 18 18"><g opacity="1"><rect x="1" y="2.5" width="14" height="10.5" rx="1.500" fill="#cbcbc9" stroke="#a0a09e" stroke-width=".8"/><rect x="5.5" y="1.3" width="5" height="1.600" fill="#a0a09e"/><circle cx="8" cy="8.05" r="3.600" fill="#cfe6f8" stroke="#8f8f8d" stroke-width="1.400"/><circle cx="2.6" cy="4.1" r=".7" fill="#e55"/></g><path d="M8.500 8.500l7 7" stroke="#8b8158" stroke-width="3.200" stroke-linecap="round"/><path d="M8.500 8.500l6.500 6.500" stroke="#e8b830" stroke-width="2" stroke-linecap="round"/><circle cx="8" cy="8" r="2.600" fill="#e8f4fc" stroke="#8f8f8d" stroke-width="1"/></svg><svg class="a" style="left:772px;top:764px;width:18px;height:18px" viewBox="0 0 18 18"><rect x="1.500" y="1.500" width="15" height="15" fill="none" stroke="#8f8b85" stroke-width="1" stroke-dasharray="3 2"/><path d="M9 5v8M5 9h8" stroke="#7e9572" stroke-width="3.600"/><path d="M9 5.600v6.800M5.600 9h6.800" stroke="#a6d990" stroke-width="2.200"/></svg><svg class="a" style="left:798px;top:764px;width:18px;height:18px" viewBox="0 0 18 18"><rect x="1.500" y="1.500" width="15" height="15" fill="none" stroke="#8f8b85" stroke-width="1" stroke-dasharray="3 2"/><path d="M5.500 9h7" stroke="#e0262a" stroke-width="2.600" stroke-linecap="round"/></svg><svg class="a" style="left:824px;top:764px;width:18px;height:18px" viewBox="0 0 18 18"><rect x="1.500" y="1.500" width="15" height="15" fill="none" stroke="#8f8b85" stroke-width="1" stroke-dasharray="3 2"/><path d="M7.500 3v6M4.500 6h6" stroke="#7e9572" stroke-width="3"/><path d="M7.500 3.500v5M5 6h5" stroke="#a6d990" stroke-width="1.700"/><path d="M4.500 12.500h6" stroke="#e0262a" stroke-width="2.200"/><path d="M11.5 11l4.500 4.200-1.600.2 1.500 2-1 .8-1.500-2-1 1.300z" fill="#77736d"/></svg><svg class="a" style="left:856px;top:764px;width:18px;height:18px" viewBox="0 0 18 18"><rect x="1.500" y="1.500" width="15" height="15" fill="none" stroke="#8f8b85" stroke-width="1" stroke-dasharray="3 2"/><path d="M8.500 4l5 9h-10z" fill="#a6d990" stroke="#7e9572" stroke-width=".8"/><path d="M11.5 10.5l4.500 4.200-1.600.2 1.500 2-1 .8-1.500-2-1 1.300z" fill="#77736d"/></svg><svg class="a" style="left:882px;top:764px;width:18px;height:18px" viewBox="0 0 18 18"><rect x="1.500" y="1.500" width="15" height="15" fill="none" stroke="#8f8b85" stroke-width="1" stroke-dasharray="3 2"/><path d="M8.500 3.500l4.500 8.500h-9z" fill="none" stroke="#bbb" stroke-width=".8"/><circle cx="8.500" cy="3.500" r="1.300" fill="#c84030"/><circle cx="4" cy="12" r="1.300" fill="#c84030"/><path d="M11.5 10.5l4.500 4.200-1.600.2 1.500 2-1 .8-1.500-2-1 1.300z" fill="#77736d"/></svg><svg class="a" style="left:909px;top:764px;width:18px;height:18px" viewBox="0 0 18 18"><path d="M1 2h10M1 2v12h7" fill="none" stroke="#aaa" stroke-width=".8" stroke-dasharray="2 1.500"/><path d="M3.500 6.500l6-3.500 6 1.500v6l-5.500 1h-6.500z" fill="#a6d990" stroke="#6aa050" stroke-width="1"/><path d="M3.500 6.500l6.500 1 5.500-3M10 7.500v4" fill="none" stroke="#6aa050" stroke-width=".8"/><path d="M9.5 12l4.500 4.200-1.600.2 1.500 2-1 .8-1.500-2-1 1.300z" fill="#77736d"/></svg><svg class="a" style="left:935px;top:764px;width:18px;height:18px" viewBox="0 0 18 18"><path d="M1.500 4l8-2.500 6.500 1.500v9l-8 2.500-6.500-1.500z" fill="none" stroke="#aaa" stroke-width=".8" stroke-dasharray="1.500 1.300"/><path d="M8 5.500v9.500M1.500 4l6.500 1.500 8-2.500" fill="none" stroke="#bbb" stroke-width=".7" stroke-dasharray="1.500 1.300"/><circle cx="9.5" cy="1.5" r="1" fill="#e0463a"/><circle cx="16" cy="3" r="1" fill="#e0463a"/><circle cx="3" cy="7" r="1" fill="#e0463a"/><circle cx="6" cy="8" r="1" fill="#e0463a"/><circle cx="3" cy="12" r="1" fill="#e0463a"/><circle cx="6" cy="13" r="1" fill="#e0463a"/><circle cx="16" cy="12" r="1" fill="#e0463a"/><path d="M9.5 12.5l4.500 4.200-1.600.2 1.500 2-1 .8-1.500-2-1 1.300z" fill="#77736d"/></svg><svg class="a" style="left:961px;top:764px;width:18px;height:18px" viewBox="0 0 18 18"><path d="M1.500 2l14 .5-3 5 4.500 4.500-5.500 4.500-8-2.500z" fill="none" stroke="#999" stroke-width=".9" stroke-dasharray="2.500 1.800"/><path d="M3 10l6-4v8z" fill="#a6d990" stroke="#7e9572" stroke-width=".8"/></svg><svg class="a" style="left:987px;top:764px;width:18px;height:18px" viewBox="0 0 18 18"><path d="M1.500 2l14 .5-3 5 4.500 4.500-5.500 4.500-8-2.500z" fill="none" stroke="#999" stroke-width=".9" stroke-dasharray="2.500 1.800"/><circle cx="4.5" cy="5.5" r="1.300" fill="#c04030"/><circle cx="11.5" cy="5.5" r="1.300" fill="#c04030"/><circle cx="8" cy="8" r="1.300" fill="#c04030"/><circle cx="4.5" cy="10.5" r="1.300" fill="#c04030"/><circle cx="8.5" cy="12.5" r="1.300" fill="#c04030"/><circle cx="12.5" cy="14" r="1.300" fill="#c04030"/></svg><svg class="a" style="left:1013px;top:764px;width:18px;height:18px" viewBox="0 0 18 18"><rect x="1.500" y="1.500" width="15" height="15" fill="none" stroke="#8f8b85" stroke-width="1" stroke-dasharray="3 2"/><circle cx="5.500" cy="6" r="2.300" fill="#2c8cd0"/><circle cx="5.500" cy="13" r="2.300" fill="#2c8cd0"/><circle cx="12" cy="10" r="2.800" fill="#a6d990" stroke="#7e9572" stroke-width=".8"/><path d="M13.500 12l3 3.500" stroke="#77736d" stroke-width="1.800"/></svg><svg class="a" style="left:1040px;top:764px;width:18px;height:18px" viewBox="0 0 18 18"><circle cx="6" cy="7" r="2.300" fill="#d6d3cf" stroke="#bbb" stroke-width=".8" stroke-dasharray="1 1"/><path d="M9 9.5l4.500 4.200-1.600.2 1.500 2-1 .8-1.500-2-1 1.300z" fill="#bbb7b2"/></svg><svg class="a" style="left:1066px;top:764px;width:18px;height:18px" viewBox="0 0 18 18"><path d="M2 6l4.500-3.500h9.500v9l-4.500 4h-9.500z" fill="#d3d0cc" stroke="#bab7b2" stroke-width="1"/><path d="M2 6h9.500v9.500M11.500 6l4.500-3.500" fill="none" stroke="#bab7b2" stroke-width="1"/><path d="M11.5 10.5l4.500 4.200-1.600.2 1.500 2-1 .8-1.500-2-1 1.300z" fill="#bbb7b2"/></svg><svg class="a" style="left:1092px;top:764px;width:18px;height:18px" viewBox="0 0 18 18"><path d="M8.500 3.500l5.500 9.500h-11z" fill="#a6d990" stroke="#7e9572" stroke-width=".8"/><path d="M11.5 10.5l4.500 4.200-1.600.2 1.500 2-1 .8-1.500-2-1 1.300z" fill="#77736d"/></svg><div class="vl" style="left:675px;top:766px;height:14px;background:#d0cbc5"></div><div class="vl" style="left:707px;top:766px;height:14px;background:#d0cbc5"></div><div class="vl" style="left:765px;top:766px;height:14px;background:#d0cbc5"></div><div class="vl" style="left:849px;top:766px;height:14px;background:#d0cbc5"></div><div class="t nofit" style="left:1135px;top:765px;font-size:13px;font-weight:bold;letter-spacing:-1px;color:#111">&raquo;</div><div class="t " style="left:1147px;top:766px;font-size:13px;letter-spacing:0.09px;">RenderView4</div><div class="vbtn" style="left:1237.5px;top:761px"></div><div class="vbtn" style="left:1264.5px;top:761px"></div><div class="vbtn" style="left:1291.5px;top:761px"></div><div class="vbtn" style="left:1318.5px;top:761px"></div><svg class="a" style="left:1244px;top:766px;width:14px;height:14px" viewBox="0 0 14 14"><rect x=".5" y=".5" width="13" height="13" fill="#ced6ed" stroke="#b4bcd6"/><path d="M7 .5v13" stroke="#a4a8b8" stroke-width="1.400"/></svg><svg class="a" style="left:1271px;top:766px;width:14px;height:14px" viewBox="0 0 14 14"><rect x=".5" y=".5" width="13" height="13" fill="#ced6ed" stroke="#b4bcd6"/><path d="M.5 7h13" stroke="#a4a8b8" stroke-width="1.400"/></svg><div class="a" style="left:1300px;top:768px;width:9px;height:9px;border:1px solid #111;border-top-width:2px;background:#fff"></div><svg class="a" style="left:1327px;top:768px;width:11px;height:11px" viewBox="0 0 11 11"><rect x=".5" y=".5" width="10" height="10" rx="2" fill="#f4f2ef" stroke="#77736d"/><path d="M3 3l5 5M8 3l-5 5" stroke="#5a5752" stroke-width="1.900"/></svg><svg class="a" style="left:1352px;top:124px;width:18px;height:18px" viewBox="0 0 18 18"><g opacity="1"><rect x="2" y="3.5" width="14" height="10.5" rx="1.500" fill="#cbcbc9" stroke="#a0a09e" stroke-width=".8"/><rect x="6.5" y="2.3" width="5" height="1.600" fill="#a0a09e"/><circle cx="9" cy="9.05" r="3.600" fill="#cfe6f8" stroke="#8f8f8d" stroke-width="1.400"/><circle cx="3.6" cy="5.1" r=".7" fill="#e55"/></g><path d="M.8 4v-3h3M14.200 1h3v3M17.200 14.500v3h-3M3.800 17.500h-3v-3" fill="none" stroke="#8f8f8d" stroke-width="1"/></svg><div class="vl" style="left:1377px;top:126px;height:14px;background:#d0cbc5"></div><div class="t nofit" style="left:1391px;top:125px;font-size:13px;font-weight:bold;letter-spacing:-1px;color:#111">&raquo;</div><div class="t " style="left:1403px;top:126px;color:#1c2a50;font-size:13px;letter-spacing:0.18px;">LineChartView2</div><div class="vbtn" style="left:1507.5px;top:121px"></div><div class="vbtn" style="left:1534.5px;top:121px"></div><div class="vbtn" style="left:1561.5px;top:121px"></div><div class="vbtn" style="left:1588.5px;top:121px"></div><svg class="a" style="left:1514px;top:126px;width:14px;height:14px" viewBox="0 0 14 14"><rect x=".5" y=".5" width="13" height="13" fill="#ced6ed" stroke="#b4bcd6"/><path d="M7 .5v13" stroke="#a4a8b8" stroke-width="1.400"/></svg><svg class="a" style="left:1541px;top:126px;width:14px;height:14px" viewBox="0 0 14 14"><rect x=".5" y=".5" width="13" height="13" fill="#ced6ed" stroke="#b4bcd6"/><path d="M.5 7h13" stroke="#a4a8b8" stroke-width="1.400"/></svg><div class="a" style="left:1570px;top:128px;width:9px;height:9px;border:1px solid #111;border-top-width:2px;background:#fff"></div><svg class="a" style="left:1597px;top:128px;width:11px;height:11px" viewBox="0 0 11 11"><rect x=".5" y=".5" width="10" height="10" rx="2" fill="#f4f2ef" stroke="#77736d"/><path d="M3 3l5 5M8 3l-5 5" stroke="#5a5752" stroke-width="1.900"/></svg><svg class="a" style="left:1352px;top:403px;width:18px;height:18px" viewBox="0 0 18 18"><g opacity="1"><rect x="2" y="3.5" width="14" height="10.5" rx="1.500" fill="#cbcbc9" stroke="#a0a09e" stroke-width=".8"/><rect x="6.5" y="2.3" width="5" height="1.600" fill="#a0a09e"/><circle cx="9" cy="9.05" r="3.600" fill="#cfe6f8" stroke="#8f8f8d" stroke-width="1.400"/><circle cx="3.6" cy="5.1" r=".7" fill="#e55"/></g><path d="M.8 4v-3h3M14.200 1h3v3M17.200 14.500v3h-3M3.800 17.500h-3v-3" fill="none" stroke="#8f8f8d" stroke-width="1"/></svg><div class="vl" style="left:1377px;top:405px;height:14px;background:#d0cbc5"></div><div class="t nofit" style="left:1391px;top:404px;font-size:13px;font-weight:bold;letter-spacing:-1px;color:#111">&raquo;</div><div class="t " style="left:1403px;top:405px;color:#1c2a50;font-size:13px;letter-spacing:0.18px;">LineChartView1</div><div class="vbtn" style="left:1507.5px;top:400px"></div><div class="vbtn" style="left:1534.5px;top:400px"></div><div class="vbtn" style="left:1561.5px;top:400px"></div><div class="vbtn" style="left:1588.5px;top:400px"></div><svg class="a" style="left:1514px;top:405px;width:14px;height:14px" viewBox="0 0 14 14"><rect x=".5" y=".5" width="13" height="13" fill="#ced6ed" stroke="#b4bcd6"/><path d="M7 .5v13" stroke="#a4a8b8" stroke-width="1.400"/></svg><svg class="a" style="left:1541px;top:405px;width:14px;height:14px" viewBox="0 0 14 14"><rect x=".5" y=".5" width="13" height="13" fill="#ced6ed" stroke="#b4bcd6"/><path d="M.5 7h13" stroke="#a4a8b8" stroke-width="1.400"/></svg><div class="a" style="left:1570px;top:407px;width:9px;height:9px;border:1px solid #111;border-top-width:2px;background:#fff"></div><svg class="a" style="left:1597px;top:407px;width:11px;height:11px" viewBox="0 0 11 11"><rect x=".5" y=".5" width="10" height="10" rx="2" fill="#f4f2ef" stroke="#77736d"/><path d="M3 3l5 5M8 3l-5 5" stroke="#5a5752" stroke-width="1.900"/></svg><div class="t " style="left:1816px;top:126px;font-size:13px;letter-spacing:-0.16px;">HTMLView1</div><div class="vbtn" style="left:1894.5px;top:121px"></div><div class="vbtn" style="left:1921.5px;top:121px"></div><div class="vbtn" style="left:1948.5px;top:121px"></div><div class="vbtn" style="left:1975.5px;top:121px"></div><svg class="a" style="left:1901px;top:126px;width:14px;height:14px" viewBox="0 0 14 14"><rect x=".5" y=".5" width="13" height="13" fill="#ced6ed" stroke="#b4bcd6"/><path d="M7 .5v13" stroke="#a4a8b8" stroke-width="1.400"/></svg><svg class="a" style="left:1928px;top:126px;width:14px;height:14px" viewBox="0 0 14 14"><rect x=".5" y=".5" width="13" height="13" fill="#ced6ed" stroke="#b4bcd6"/><path d="M.5 7h13" stroke="#a4a8b8" stroke-width="1.400"/></svg><div class="a" style="left:1957px;top:128px;width:9px;height:9px;border:1px solid #111;border-top-width:2px;background:#fff"></div><svg class="a" style="left:1984px;top:128px;width:11px;height:11px" viewBox="0 0 11 11"><rect x=".5" y=".5" width="10" height="10" rx="2" fill="#f4f2ef" stroke="#77736d"/><path d="M3 3l5 5M8 3l-5 5" stroke="#5a5752" stroke-width="1.900"/></svg><div class="t " style="left:1816px;top:582px;font-size:13px;letter-spacing:-0.16px;">HTMLView3</div><div class="vbtn" style="left:1894.5px;top:577px"></div><div class="vbtn" style="left:1921.5px;top:577px"></div><div class="vbtn" style="left:1948.5px;top:577px"></div><div class="vbtn" style="left:1975.5px;top:577px"></div><svg class="a" style="left:1901px;top:582px;width:14px;height:14px" viewBox="0 0 14 14"><rect x=".5" y=".5" width="13" height="13" fill="#ced6ed" stroke="#b4bcd6"/><path d="M7 .5v13" stroke="#a4a8b8" stroke-width="1.400"/></svg><svg class="a" style="left:1928px;top:582px;width:14px;height:14px" viewBox="0 0 14 14"><rect x=".5" y=".5" width="13" height="13" fill="#ced6ed" stroke="#b4bcd6"/><path d="M.5 7h13" stroke="#a4a8b8" stroke-width="1.400"/></svg><div class="a" style="left:1957px;top:584px;width:9px;height:9px;border:1px solid #111;border-top-width:2px;background:#fff"></div><svg class="a" style="left:1984px;top:584px;width:11px;height:11px" viewBox="0 0 11 11"><rect x=".5" y=".5" width="10" height="10" rx="2" fill="#f4f2ef" stroke="#77736d"/><path d="M3 3l5 5M8 3l-5 5" stroke="#5a5752" stroke-width="1.900"/></svg><div class="a" style="left:619px;top:146px;width:726px;height:612px;background:#fbf8e6"></div><div class="a" style="left:620px;top:147px;width:724px;height:610px;background:#0000ff"></div><div class="a" style="left:622px;top:149px;width:720px;height:606px;background:#fbf8e6"></div><div class="a" id="rv1" style="left:623px;top:150px;width:718px;height:604px;background:#1a222e;overflow:hidden"><svg width="719" height="605" viewBox="0 0 719 605"><defs><linearGradient id="gTop" gradientUnits="userSpaceOnUse" x1="336.0" y1="90.0" x2="387.0" y2="90.0"><stop offset="0" stop-color="#6f9a9c"/><stop offset="0.18" stop-color="#78a69c"/><stop offset="0.5" stop-color="#7aaa9e"/><stop offset="0.55" stop-color="#7ba7a3"/><stop offset="1" stop-color="#7fb0ac"/></linearGradient><linearGradient id="gUL1" gradientUnits="userSpaceOnUse" x1="257.0" y1="120.0" x2="307.0" y2="100.0"><stop offset="0" stop-color="#4d6c74"/><stop offset="0.35" stop-color="#557880"/><stop offset="1" stop-color="#73a3a0"/></linearGradient><linearGradient id="gUL2" gradientUnits="userSpaceOnUse" x1="199.0" y1="191.0" x2="230.0" y2="136.0"><stop offset="0" stop-color="#44606a"/><stop offset="0.45" stop-color="#4f7078"/><stop offset="1" stop-color="#6e9e9c"/></linearGradient><linearGradient id="gLUa" gradientUnits="userSpaceOnUse" x1="160.0" y1="236.0" x2="176.0" y2="201.0"><stop offset="0" stop-color="#4a666e"/><stop offset="1" stop-color="#5e858a"/></linearGradient><linearGradient id="gLUb" gradientUnits="userSpaceOnUse" x1="177.0" y1="195.0" x2="167.0" y2="218.0"><stop offset="0" stop-color="#86b8a4"/><stop offset="0.5" stop-color="#74a492"/><stop offset="1" stop-color="#5c8474"/></linearGradient><linearGradient id="gLeft" gradientUnits="userSpaceOnUse" x1="152.0" y1="274.0" x2="152.0" y2="324.0"><stop offset="0" stop-color="#5d888a"/><stop offset="0.3" stop-color="#4f7278"/><stop offset="0.42" stop-color="#5d8474"/><stop offset="0.8" stop-color="#52766a"/><stop offset="0.82" stop-color="#48646c"/><stop offset="1" stop-color="#4b6a72"/></linearGradient><linearGradient id="gLLa" gradientUnits="userSpaceOnUse" x1="157.0" y1="358.0" x2="172.0" y2="396.0"><stop offset="0" stop-color="#70a09e"/><stop offset="0.5" stop-color="#4f7178"/><stop offset="1" stop-color="#43606a"/></linearGradient><linearGradient id="gLL2" gradientUnits="userSpaceOnUse" x1="195.0" y1="432.0" x2="223.0" y2="461.0"><stop offset="0" stop-color="#6e9e9c"/><stop offset="0.5" stop-color="#58808a"/><stop offset="1" stop-color="#4a6a74"/></linearGradient><linearGradient id="gLL1" gradientUnits="userSpaceOnUse" x1="255.0" y1="484.0" x2="294.0" y2="500.0"><stop offset="0" stop-color="#82b2a2"/><stop offset="0.35" stop-color="#7fae9f"/><stop offset="0.4" stop-color="#62909a"/><stop offset="1" stop-color="#6b9a9c"/></linearGradient><linearGradient id="gBot" gradientUnits="userSpaceOnUse" x1="331.0" y1="510.0" x2="382.0" y2="510.0"><stop offset="0" stop-color="#74a4a6"/><stop offset="0.3" stop-color="#78a8a4"/><stop offset="0.35" stop-color="#7faf9f"/><stop offset="0.8" stop-color="#7cac9e"/><stop offset="0.85" stop-color="#74a4a2"/><stop offset="1" stop-color="#6c9c9e"/></linearGradient><linearGradient id="gLR1" gradientUnits="userSpaceOnUse" x1="417.0" y1="505.0" x2="462.0" y2="490.0"><stop offset="0" stop-color="#86b6b4"/><stop offset="1" stop-color="#8fc0b6"/></linearGradient><linearGradient id="gLR2" gradientUnits="userSpaceOnUse" x1="489.0" y1="466.0" x2="519.0" y2="438.0"><stop offset="0" stop-color="#84b4b2"/><stop offset="1" stop-color="#92c6ba"/></linearGradient><linearGradient id="gRL" gradientUnits="userSpaceOnUse" x1="542.0" y1="405.0" x2="557.0" y2="366.0"><stop offset="0" stop-color="#9ccfbc"/><stop offset="0.45" stop-color="#9fd2c0"/><stop offset="0.5" stop-color="#8fc2ba"/><stop offset="1" stop-color="#96cabf"/></linearGradient><linearGradient id="gRight" gradientUnits="userSpaceOnUse" x1="567.0" y1="278.0" x2="567.0" y2="330.0"><stop offset="0" stop-color="#8ec2b8"/><stop offset="0.15" stop-color="#9ad0be"/><stop offset="0.75" stop-color="#9ed4c2"/><stop offset="0.8" stop-color="#90c4bc"/><stop offset="1" stop-color="#8abdb6"/></linearGradient><linearGradient id="gRU" gradientUnits="userSpaceOnUse" x1="547.0" y1="205.0" x2="561.0" y2="246.0"><stop offset="0" stop-color="#8cc0b8"/><stop offset="1" stop-color="#94cabd"/></linearGradient><linearGradient id="gUR2" gradientUnits="userSpaceOnUse" x1="495.0" y1="142.0" x2="525.0" y2="172.0"><stop offset="0" stop-color="#7eaeac"/><stop offset="0.5" stop-color="#8abcb4"/><stop offset="1" stop-color="#8fc2b8"/></linearGradient><linearGradient id="gUR1" gradientUnits="userSpaceOnUse" x1="424.0" y1="102.0" x2="462.0" y2="118.0"><stop offset="0" stop-color="#6e9a9e"/><stop offset="0.3" stop-color="#7aa8a6"/><stop offset="0.62" stop-color="#7eaca8"/><stop offset="0.66" stop-color="#8dbeb0"/><stop offset="1" stop-color="#90c2b2"/></linearGradient><linearGradient id="gGreenL" gradientUnits="userSpaceOnUse" x1="-623.0" y1="-150.0" x2="-622.0" y2="-150.0"><stop offset="0" stop-color="#6fa650"/><stop offset="1" stop-color="#6fa650"/></linearGradient></defs><polygon points="341.0,121.0 349.0,152.0 339.0,153.0" fill="#74a850" /><path d="M336.0,33.0 L387.0,33.0 Q388.0,100.0 383.0,155.0 L348.0,155.0 Q334.0,100.0 336.0,33.0 Z" fill="url(#gTop)"/><polygon points="342.0,154.0 376.0,154.0 375.0,158.0 344.0,158.0" fill="#6fa09e" /><polygon points="214.0,77.0 232.0,66.0 293.0,168.0 274.0,180.0" fill="#70a552" /><polygon points="226.0,69.0 232.0,66.0 293.0,168.0 289.0,172.0" fill="#66984a" /><path d="M235.0,62.0 L281.0,43.0 Q312.0,100.0 324.0,156.0 L292.0,168.0 Q257.0,115.0 235.0,62.0 Z" fill="url(#gUL1)"/><polygon points="290.0,169.0 322.0,157.0 323.0,161.0 292.0,173.0" fill="#6fa09e" /><path d="M152.5,128.0 L188.0,92.0 Q237.0,135.0 271.0,180.0 L246.0,203.0 Q192.0,170.0 152.5,128.0 Z" fill="url(#gUL2)"/><polygon points="266.0,176.0 270.0,180.0 247.0,206.0 243.0,202.0" fill="#6fa09e" /><polygon points="132.0,160.0 236.0,217.0 232.5,225.0 122.0,175.0" fill="#74ad52" /><polygon points="132.0,160.0 236.0,217.0 235.0,219.0 131.0,162.0" fill="#5f9444" /><path d="M120.7,173.0 L230.5,228.0 L218.0,252.0 Q157.0,242.0 102.0,220.0 Z" fill="url(#gLUa)"/><polygon points="121.1,173.5 231.9,223.2 219.7,243.9 121.1,180.0" fill="url(#gLUb)" /><polygon points="227.0,230.0 232.0,232.0 220.0,262.0 215.0,260.0" fill="#6fa09e" /><path d="M90.0,274.0 Q157.0,273.0 211.6,278.0 L211.6,321.0 Q147.0,326.0 90.0,324.4 Z" fill="url(#gLeft)"/><polygon points="177.0,318.0 210.8,312.5 210.8,321.5" fill="#7cb458" /><polygon points="210.0,278.0 215.0,278.0 215.0,318.0 210.0,318.0" fill="#6fa09e" /><path d="M100.0,379.6 Q157.0,355.0 214.2,336.5 L226.3,368.9 L122.6,427.2 L119.3,426.0 Z" fill="url(#gLLa)"/><polygon points="122.6,427.2 226.3,368.9 239.0,390.0 134.2,446.3" fill="#72a954" /><polygon points="122.6,427.2 226.3,368.9 227.5,371.5 124.0,430.0" fill="#5f8c60" /><polygon points="216.4,340.7 221.0,339.0 232.0,370.0 227.0,372.0" fill="#6fa09e" /><path d="M149.7,472.5 Q192.0,430.0 239.0,392.8 L260.1,414.0 Q227.0,465.0 185.5,508.3 Z" fill="url(#gLL2)"/><polygon points="243.2,392.8 247.0,389.5 269.0,413.0 265.0,417.0" fill="#6fa09e" /><polygon points="273.3,424.6 279.8,427.2 231.4,538.5 217.3,528.9" fill="#6a9c42" /><polygon points="276.0,425.8 279.8,427.2 231.4,538.5 226.0,535.0" fill="#5d8c3c" /><path d="M279.8,427.2 L310.8,442.1 Q302.0,505.0 277.6,559.0 L230.5,537.9 Z" fill="url(#gLL1)"/><polygon points="279.8,427.2 299.0,436.5 235.0,540.0 230.5,537.9" fill="#82b2a2" opacity=".85"/><polygon points="286.9,429.4 289.0,425.5 320.0,439.5 318.0,443.5" fill="#6fa09e" /><path d="M335.6,449.3 L378.6,449.3 Q384.0,510.0 382.2,571.0 L331.1,571.0 Q329.0,510.0 335.6,449.3 Z" fill="url(#gBot)"/><polygon points="368.0,450.0 378.6,450.0 377.0,482.0" fill="#6ea04a" /><polygon points="342.5,445.6 375.6,445.6 374.6,450.0 343.5,450.0" fill="#6fa09e" /><polygon points="426.7,435.7 446.2,423.7 503.9,527.4 486.8,537.9" fill="#456730" /><polygon points="426.7,435.7 433.0,432.0 489.0,536.5 486.8,537.9" fill="#50763a" /><polygon points="472.0,515.0 478.0,511.0 492.0,535.0 486.8,537.9" fill="#5c8a3c" /><path d="M393.6,446.2 L426.7,437.2 Q462.0,485.0 482.9,540.9 L436.6,560.4 Q407.0,505.0 393.6,446.2 Z" fill="url(#gLR1)"/><polygon points="398.0,440.0 430.6,429.7 432.0,434.0 399.5,444.5" fill="#7fb2ae" /><path d="M446.8,422.2 L472.3,400.6 Q527.0,435.0 565.5,475.7 L529.7,511.5 Q482.0,470.0 446.8,422.2 Z" fill="url(#gLR2)"/><polygon points="449.0,413.0 473.0,392.0 476.0,396.0 452.0,417.0" fill="#7fb2ae" /><polygon points="481.7,385.6 486.8,380.1 593.4,428.8 585.9,443.8" fill="#43632f" /><polygon points="567.0,425.0 593.4,428.8 585.9,443.8" fill="#527a36" /><path d="M497.3,350.1 Q562.0,360.0 616.0,383.1 L596.4,429.7 L486.8,380.1 Z" fill="url(#gRL)"/><polygon points="497.3,350.1 596.4,429.7 486.8,380.1" fill="#a4d6c2" opacity=".55"/><polygon points="497.0,341.0 503.0,344.0 491.0,374.0 486.0,371.0" fill="#7fb2ae" /><path d="M507.0,282.7 Q567.0,276.0 628.0,278.0 L628.0,329.0 Q562.0,330.0 505.7,325.5 Z" fill="url(#gRight)"/><polygon points="507.0,282.7 540.0,283.0 507.0,290.0" fill="#4a6e32" /><polygon points="503.0,286.0 507.5,284.0 507.5,324.0 504.0,322.0" fill="#7fb2ae" /><polygon points="583.5,157.0 594.7,173.4 492.0,234.0 480.7,215.6" fill="#42622f" /><polygon points="594.7,173.4 599.0,178.0 527.0,212.0 537.0,207.0" fill="#55803a" /><path d="M599.0,178.2 L617.3,224.0 Q562.0,250.0 504.6,267.0 L490.5,232.5 Z" fill="url(#gRU)"/><polygon points="486.3,231.0 491.0,229.0 504.0,260.0 500.4,262.0" fill="#7fb2ae" /><path d="M532.2,95.4 L568.5,131.7 Q527.0,175.0 480.7,213.4 L457.6,187.5 Q487.0,135.0 532.2,95.4 Z" fill="url(#gUR2)"/><polygon points="449.7,186.0 453.0,183.0 478.0,208.5 475.0,211.4" fill="#7fb2ae" /><polygon points="487.0,66.0 501.0,74.8 444.0,179.0 437.0,174.8" fill="#466a30" /><polygon points="487.0,66.0 493.0,69.5 440.0,177.0 437.0,174.8" fill="#3c5a2c" /><path d="M440.4,44.4 L487.0,63.5 L437.0,174.8 L406.9,160.7 Q414.0,100.0 440.4,44.4 Z" fill="url(#gUR1)"/><polygon points="480.7,61.0 487.0,63.5 437.0,174.8 415.9,165.0" fill="#8fc2b0" opacity=".8"/><polygon points="398.4,160.7 400.0,157.0 431.5,170.0 430.0,173.4" fill="#7fb2ae" /><rect x="667.0" y="59.0" width="23.2" height="36" fill="#ffffff"/><rect x="667.0" y="99.7" width="23.2" height="36" fill="#ff0000"/><rect x="667.0" y="140.3" width="23.2" height="36" fill="#00ff00"/><rect x="667.0" y="180.9" width="23.2" height="36" fill="#0000ff"/><rect x="667.0" y="221.6" width="23.2" height="36" fill="#ffff00"/><rect x="667.0" y="262.2" width="23.2" height="36" fill="#ff00ff"/><rect x="667.0" y="302.9" width="23.2" height="36" fill="#00ffff"/><rect x="667.0" y="343.6" width="23.2" height="36" fill="#a0a0ff"/><rect x="667.0" y="384.2" width="23.2" height="36" fill="#aa7f50"/><rect x="667.0" y="424.8" width="23.2" height="36" fill="#ff7db4"/><rect x="667.0" y="465.5" width="23.2" height="36" fill="#8855b0"/><rect x="667.0" y="506.1" width="23.2" height="36" fill="#ffbe7d"/><g stroke-width="1.2"><path d="M75.500 528.500V495" stroke="#1fd01f"/><path d="M75.500 528.500H40" stroke="#d8d818"/><polygon points="75.500,487 72.500,496 78.500,496" fill="#1fd01f" stroke="none"/><polygon points="33,528.500 42,525.500 42,531.500" fill="#d8d818" stroke="none"/><circle cx="75.500" cy="528.500" r="2.500" fill="#e02020" stroke="none"/></g><g fill="#e8e8e8" font-family="Liberation Sans" font-size="10"><text x="78" y="495">Z</text><text x="44" y="527">Y</text><text x="78" y="529">X</text></g></svg></div><div class="a" style="left:622px;top:789px;width:720px;height:137px;background:#f9f7f3"></div><div class="a" id="rv4" style="left:623px;top:790px;width:718px;height:135px;background:#1a222e;overflow:hidden"><svg width="718" height="135" viewBox="0 0 718 135"><defs><linearGradient id="dsp" gradientUnits="userSpaceOnUse" x1="224.2" y1="123.1" x2="401.3" y2="-31.4"><stop offset="0" stop-color="#bccdd8"/><stop offset="0.12" stop-color="#b2c6d4"/><stop offset="0.25" stop-color="#9ab6ca"/><stop offset="0.36" stop-color="#6290b8"/><stop offset="0.46" stop-color="#2c659e"/><stop offset="0.54" stop-color="#194676"/><stop offset="0.61" stop-color="#132c3e"/><stop offset="0.645" stop-color="#13421e"/><stop offset="0.7" stop-color="#185c1e"/><stop offset="0.76" stop-color="#367630"/><stop offset="0.81" stop-color="#729654"/><stop offset="0.85" stop-color="#aaa676"/><stop offset="0.875" stop-color="#b29c72"/><stop offset="0.91" stop-color="#915c3a"/><stop offset="0.95" stop-color="#6c2c1e"/><stop offset="1" stop-color="#481410"/></linearGradient><linearGradient id="cbar" x1="0" y1="1" x2="0" y2="0"><stop offset="0" stop-color="#f4f8ff"/><stop offset="0.06" stop-color="#b5d2f0"/><stop offset="0.16" stop-color="#4f8fd0"/><stop offset="0.26" stop-color="#2a65a8"/><stop offset="0.32" stop-color="#1c3f6a"/><stop offset="0.365" stop-color="#16303a"/><stop offset="0.4" stop-color="#185020"/><stop offset="0.5" stop-color="#1f6e22"/><stop offset="0.58" stop-color="#4c8c3c"/><stop offset="0.65" stop-color="#9ab86a"/><stop offset="0.71" stop-color="#e0d8a0"/><stop offset="0.77" stop-color="#e2b884"/><stop offset="0.85" stop-color="#c2764a"/><stop offset="0.93" stop-color="#963c26"/><stop offset="1" stop-color="#661e18"/></linearGradient><linearGradient id="hub" x1="0" y1="0" x2="1" y2="0"><stop offset="0" stop-color="#c9cdd0"/><stop offset=".5" stop-color="#9da3a8"/><stop offset=".55" stop-color="#3c4248"/><stop offset="1" stop-color="#454b50"/></linearGradient></defs><path d="M239.4,39.2 C 225.0,39.0 217.7,55.0 217.7,67.0 C 217.7,82.0 225.0,96.0 239.4,95.2 Z" fill="#b5babf"/><path d="M239.4,40.5 C 231.0,42.0 226.0,56.0 226.0,67.0 C 226.0,80.0 230.0,92.0 237.5,94.0 Z" fill="#3f454b"/><path d="M235.8,12.0 Q337.0,9.0 444.5,17.5 L435.9,109.7 Q377.0,114.0 322.6,121.5 Q272.0,127.0 224.2,123.1 Q239.0,90.0 237.5,68.0 Z" fill="url(#dsp)"/><path d="M235.8,12.0 L239.0,12.0 L239.0,70.0 Q238.0,40.0 235.8,12.0 Z" fill="url(#dsp)"/><rect x="560.0" y="16.7" width="23" height="107.5" fill="url(#cbar)"/><rect x="580.0" y="16.1" width="13" height="1.2" fill="#fff"/><rect x="580.0" y="41.9" width="13" height="1.2" fill="#fff"/><rect x="580.0" y="83.6" width="13" height="1.2" fill="#fff"/><rect x="580.0" y="123.6" width="13" height="1.2" fill="#fff"/><g fill="#fff" font-family="Liberation Sans" font-weight="bold" font-size="20.5" letter-spacing="-.3"><text x="599.0" y="21.9">1.3e-04</text><text x="599.0" y="47.7">0.0001</text><text x="599.0" y="89.4">5e-5</text><text x="599.0" y="129.4">0.0e+00</text></g><text transform="translate(698.5,145.5) rotate(-90)" fill="#fff" font-family="Liberation Sans" font-weight="bold" font-size="27.500" letter-spacing="-.3">placement (</text><path d="M18.500 119v6" stroke="#e02020" stroke-width="1.200"/><path d="M18.500 119h6" stroke="#20c020" stroke-width="1"/><path d="M16.500 123l2 2" stroke="#e02020" stroke-width="1"/></svg></div><div class="a" style="left:1351px;top:150px;width:261px;height:242px;background:#fff;overflow:hidden"><svg width="261" height="242" viewBox="0 0 261 242" font-family="Liberation Sans"><path d="M76.8 38.5H241.0" stroke="#ececec" stroke-width="1"/><path d="M72.8 38.5h4.0" stroke="#555" stroke-width="1"/><path d="M76.8 25.5H241.0" stroke="#ececec" stroke-width="1"/><path d="M72.8 25.5h4.0" stroke="#555" stroke-width="1"/><path d="M76.8 80.5H241.0" stroke="#ececec" stroke-width="1"/><path d="M72.8 80.5h4.0" stroke="#555" stroke-width="1"/><path d="M76.8 67.5H241.0" stroke="#ececec" stroke-width="1"/><path d="M72.8 67.5h4.0" stroke="#555" stroke-width="1"/><path d="M76.8 60.5H241.0" stroke="#f4f4f4" stroke-width="1"/><path d="M73.8 60.5h3.0" stroke="#555" stroke-width="1"/><path d="M76.8 55.5H241.0" stroke="#f4f4f4" stroke-width="1"/><path d="M73.8 55.5h3.0" stroke="#555" stroke-width="1"/><path d="M76.8 51.5H241.0" stroke="#ececec" stroke-width="1"/><path d="M72.8 51.5h4.0" stroke="#555" stroke-width="1"/><path d="M76.8 47.5H241.0" stroke="#f4f4f4" stroke-width="1"/><path d="M73.8 47.5h3.0" stroke="#555" stroke-width="1"/><path d="M76.8 44.5H241.0" stroke="#f4f4f4" stroke-width="1"/><path d="M73.8 44.5h3.0" stroke="#555" stroke-width="1"/><path d="M76.8 42.5H241.0" stroke="#f4f4f4" stroke-width="1"/><path d="M73.8 42.5h3.0" stroke="#555" stroke-width="1"/><path d="M76.8 40.5H241.0" stroke="#f4f4f4" stroke-width="1"/><path d="M73.8 40.5h3.0" stroke="#555" stroke-width="1"/><path d="M76.8 122.5H241.0" stroke="#ececec" stroke-width="1"/><path d="M72.8 122.5h4.0" stroke="#555" stroke-width="1"/><path d="M76.8 109.5H241.0" stroke="#ececec" stroke-width="1"/><path d="M72.8 109.5h4.0" stroke="#555" stroke-width="1"/><path d="M76.8 102.5H241.0" stroke="#f4f4f4" stroke-width="1"/><path d="M73.8 102.5h3.0" stroke="#555" stroke-width="1"/><path d="M76.8 97.5H241.0" stroke="#f4f4f4" stroke-width="1"/><path d="M73.8 97.5h3.0" stroke="#555" stroke-width="1"/><path d="M76.8 93.5H241.0" stroke="#ececec" stroke-width="1"/><path d="M72.8 93.5h4.0" stroke="#555" stroke-width="1"/><path d="M76.8 89.5H241.0" stroke="#f4f4f4" stroke-width="1"/><path d="M73.8 89.5h3.0" stroke="#555" stroke-width="1"/><path d="M76.8 87.5H241.0" stroke="#f4f4f4" stroke-width="1"/><path d="M73.8 87.5h3.0" stroke="#555" stroke-width="1"/><path d="M76.8 84.5H241.0" stroke="#f4f4f4" stroke-width="1"/><path d="M73.8 84.5h3.0" stroke="#555" stroke-width="1"/><path d="M76.8 82.5H241.0" stroke="#f4f4f4" stroke-width="1"/><path d="M73.8 82.5h3.0" stroke="#555" stroke-width="1"/><path d="M76.8 164.5H241.0" stroke="#ececec" stroke-width="1"/><path d="M72.8 164.5h4.0" stroke="#555" stroke-width="1"/><path d="M76.8 152.5H241.0" stroke="#ececec" stroke-width="1"/><path d="M72.8 152.5h4.0" stroke="#555" stroke-width="1"/><path d="M76.8 144.5H241.0" stroke="#f4f4f4" stroke-width="1"/><path d="M73.8 144.5h3.0" stroke="#555" stroke-width="1"/><path d="M76.8 139.5H241.0" stroke="#f4f4f4" stroke-width="1"/><path d="M73.8 139.5h3.0" stroke="#555" stroke-width="1"/><path d="M76.8 135.5H241.0" stroke="#ececec" stroke-width="1"/><path d="M72.8 135.5h4.0" stroke="#555" stroke-width="1"/><path d="M76.8 132.5H241.0" stroke="#f4f4f4" stroke-width="1"/><path d="M73.8 132.5h3.0" stroke="#555" stroke-width="1"/><path d="M76.8 129.5H241.0" stroke="#f4f4f4" stroke-width="1"/><path d="M73.8 129.5h3.0" stroke="#555" stroke-width="1"/><path d="M76.8 126.5H241.0" stroke="#f4f4f4" stroke-width="1"/><path d="M73.8 126.5h3.0" stroke="#555" stroke-width="1"/><path d="M76.8 124.5H241.0" stroke="#f4f4f4" stroke-width="1"/><path d="M73.8 124.5h3.0" stroke="#555" stroke-width="1"/><path d="M72.8 25.5h4" stroke="#555"/><path d="M105.5 24.4V195.7" stroke="#ececec"/><path d="M105.5 195.7v4" stroke="#555"/><path d="M224.5 24.4V195.7" stroke="#ececec"/><path d="M224.5 195.7v4" stroke="#555"/><polyline points="76.8,65.3 78.8,64.7 80.8,64.6 82.8,64.8 84.8,64.6 86.8,63.8 88.8,63.1 90.8,63.0 92.8,63.6 94.8,64.1 96.8,64.0 98.8,63.5 100.8,63.5 102.8,63.9 104.8,64.1 106.8,63.5 108.8,62.4 110.8,61.5 112.8,61.2 114.8,61.2 116.8,60.8 118.8,60.1 120.8,59.7 122.8,60.3 124.8,61.3 126.8,62.0 128.8,62.2 130.8,62.2 132.8,62.8 134.8,63.6 136.8,64.1 138.8,63.7 140.8,63.1 142.8,62.8 144.8,63.2 146.8,63.7 148.8,63.6" fill="none" stroke="#3f7fc4" stroke-width="1.600" stroke-linejoin="round"/><polyline points="76.8,105.4 78.8,105.3 80.8,104.9 82.8,104.6 84.8,105.0 86.8,105.5 88.8,105.7 90.8,105.3 92.8,104.7 94.8,104.4 96.8,104.5 98.8,104.3 100.8,103.5 102.8,102.7 104.8,102.3 106.8,102.7 108.8,103.1 110.8,103.2 112.8,103.1 114.8,103.4 116.8,104.2 118.8,105.1 120.8,105.5 122.8,105.3 124.8,105.1 126.8,105.3 128.8,105.7 130.8,105.6 132.8,105.1 134.8,104.7 136.8,104.9 138.8,105.5 140.8,106.0 142.8,106.0 144.8,105.9 146.8,106.1 148.8,106.7" fill="none" stroke="#111111" stroke-width="1.600" stroke-linejoin="round"/><polyline points="76.8,114.8 78.8,115.0 80.8,114.7 82.8,114.6 84.8,114.9 86.8,115.1 88.8,114.7 90.8,113.8 92.8,113.1 94.8,113.2 96.8,113.7 98.8,113.9 100.8,113.5 102.8,113.2 104.8,113.5 106.8,114.2 108.8,114.4 110.8,113.7 112.8,112.7 114.8,112.1 116.8,112.0 118.8,111.8 120.8,111.0 122.8,110.0 124.8,109.5 126.8,110.0 128.8,110.8 130.8,111.1 132.8,111.1 134.8,111.3 136.8,112.2 138.8,113.2 140.8,113.6 142.8,113.2 144.8,112.7 146.8,112.8 148.8,113.2" fill="none" stroke="#a65e3e" stroke-width="1.600" stroke-linejoin="round"/><polyline points="76.8,124.9 78.8,124.9 80.8,125.4 82.8,125.7 84.8,125.2 86.8,124.3 88.8,123.6 90.8,123.4 92.8,123.5 94.8,123.1 96.8,122.4 98.8,122.1 100.8,122.6 102.8,123.5 104.8,124.2 106.8,124.3 108.8,124.5 110.8,125.0 112.8,125.9 114.8,126.4 116.8,126.2 118.8,125.6 120.8,125.4 122.8,125.7 124.8,126.0 126.8,125.7 128.8,125.3 130.8,125.3 132.8,126.0 134.8,126.8 136.8,127.1 138.8,126.8 140.8,126.6 142.8,126.8 144.8,127.0 146.8,126.7 148.8,125.6" fill="none" stroke="#9a50b8" stroke-width="1.600" stroke-linejoin="round"/><polyline points="76.8,133.4 78.8,132.5 80.8,131.7 82.8,131.6 84.8,132.1 86.8,132.5 88.8,132.5 90.8,132.5 92.8,133.1 94.8,134.2 96.8,135.1 98.8,135.3 100.8,135.1 102.8,135.0 104.8,135.4 106.8,135.7 108.8,135.4 110.8,134.7 112.8,134.3 114.8,134.6 116.8,135.2 118.8,135.5 120.8,135.3 122.8,135.2 124.8,135.5 126.8,136.2 128.8,136.4 130.8,135.8 132.8,135.0 134.8,134.5 136.8,134.3 138.8,134.0 140.8,133.2 142.8,132.3 144.8,131.8 146.8,132.2 148.8,132.7" fill="none" stroke="#ff8012" stroke-width="1.600" stroke-linejoin="round"/><polyline points="76.8,178.1 78.8,178.0 80.8,178.5 82.8,179.0 84.8,179.3 86.8,179.4 88.8,179.7 90.8,180.3 92.8,181.0 94.8,181.2 96.8,181.0 98.8,180.7 100.8,180.7 102.8,180.9 104.8,180.9 106.8,180.5 108.8,180.1 110.8,180.3 112.8,180.8 114.8,181.1 116.8,181.1 118.8,180.9 120.8,180.9 122.8,181.2 124.8,181.4 126.8,181.0 128.8,180.2 130.8,179.6 132.8,179.4 134.8,179.3 136.8,179.0 138.8,178.4 140.8,178.1 142.8,178.3 144.8,178.9 146.8,179.2 148.8,179.2 150.8,179.1 152.8,179.4 154.8,179.9 156.8,180.1 158.8,179.8 160.8,179.4 162.8,179.2 164.8,179.5 166.8,179.8 168.8,179.8 170.8,179.6 172.8,179.8 174.8,180.5 176.8,181.3 178.8,181.6 180.8,181.5 182.8,181.4 184.8,181.7 186.8,181.9 188.8,181.7 190.8,181.0 192.8,180.3 194.8,180.1 196.8,180.1 198.8,180.0 200.8,179.6 202.8,179.3 204.8,179.3 206.8,179.8 208.8,180.1 210.8,180.0 212.8,179.6 214.8,179.4 216.8,179.5 218.8,179.5 220.8,179.2 222.8,178.5 224.8,178.1 226.8,178.3 228.8,178.7 230.8,178.9 232.8,178.9 234.8,179.0 236.8,179.6 238.8,180.4 240.8,181.0" fill="none" stroke="#e0262a" stroke-width="1.600" stroke-linejoin="round"/><path d="M76.8 24.4V195.7H241.0" fill="none" stroke="#555" stroke-width="1.200"/><g font-size="14.500" fill="#333" text-anchor="end"><text x="70.0" y="30.4">0.2</text><text x="70.0" y="43.0">0.1</text><text x="70.0" y="55.2">0.05</text><text x="70.0" y="71.9">0.02</text><text x="70.0" y="85.2">0.01</text><text x="70.0" y="98.2">0.005</text><text x="70.0" y="114.7">0.002</text><text x="70.0" y="126.8">0.001</text><text x="70.0" y="140.2">0.0005</text><text x="70.0" y="156.8">0.0002</text><text x="70.0" y="169.6">0.0001</text></g><g font-size="14.500" fill="#333" text-anchor="middle"><text x="105.4" y="212.8">6500</text><text x="224.5" y="212.8">7000</text></g><text x="159.4" y="19.9" font-size="19.500" font-weight="bold" text-anchor="middle" textLength="136" lengthAdjust="spacingAndGlyphs" fill="#111">CFD Residuals</text><text x="159.4" y="232.7" font-size="18" font-weight="bold" text-anchor="middle" textLength="78.500" lengthAdjust="spacingAndGlyphs" fill="#111">iterations</text><text transform="translate(20.5,108.9) rotate(-90)" font-size="18" font-weight="bold" text-anchor="middle" textLength="76.500" lengthAdjust="spacingAndGlyphs" fill="#111">residuals</text><rect x="149.5" y="23.5" width="92" height="126" fill="#fff" stroke="#666" stroke-width="1"/><path d="M154.4 35.9h21.200" stroke="#111" stroke-width="1.600"/><text x="179.6" y="41.4" font-size="16.500" font-weight="bold" fill="#111" textLength="8" lengthAdjust="spacingAndGlyphs">k</text><path d="M154.4 56.0h21.200" stroke="#e0262a" stroke-width="1.600"/><text x="179.6" y="61.5" font-size="16.500" font-weight="bold" fill="#111" textLength="55.7" lengthAdjust="spacingAndGlyphs">omega</text><path d="M154.4 76.1h21.200" stroke="#3f7fc4" stroke-width="1.600"/><text x="179.6" y="81.6" font-size="16.500" font-weight="bold" fill="#111" textLength="9.5" lengthAdjust="spacingAndGlyphs">p</text><path d="M154.4 96.1h21.200" stroke="#9a50b8" stroke-width="1.600"/><text x="179.6" y="101.6" font-size="16.500" font-weight="bold" fill="#111" textLength="18" lengthAdjust="spacingAndGlyphs">Ux</text><path d="M154.4 116.2h21.200" stroke="#ff8012" stroke-width="1.600"/><text x="179.6" y="121.7" font-size="16.500" font-weight="bold" fill="#111" textLength="18" lengthAdjust="spacingAndGlyphs">Uy</text><path d="M154.4 136.3h21.200" stroke="#a65e3e" stroke-width="1.600"/><text x="179.6" y="141.8" font-size="16.500" font-weight="bold" fill="#111" textLength="17" lengthAdjust="spacingAndGlyphs">Uz</text></svg></div><div class="a" style="left:1351px;top:430px;width:261px;height:495px;background:#fff;overflow:hidden"><svg width="261" height="495" viewBox="0 0 261 495" font-family="Liberation Sans"><path d="M60.8 68.5H240.8" stroke="#f1f1f1"/><path d="M56.8 68.5h4" stroke="#555"/><path d="M60.8 118.5H240.8" stroke="#f1f1f1"/><path d="M56.8 118.5h4" stroke="#555"/><path d="M60.8 167.5H240.8" stroke="#f1f1f1"/><path d="M56.8 167.5h4" stroke="#555"/><path d="M60.8 217.5H240.8" stroke="#f1f1f1"/><path d="M56.8 217.5h4" stroke="#555"/><path d="M60.8 266.5H240.8" stroke="#f1f1f1"/><path d="M56.8 266.5h4" stroke="#555"/><path d="M60.8 315.5H240.8" stroke="#f1f1f1"/><path d="M56.8 315.5h4" stroke="#555"/><path d="M60.8 364.5H240.8" stroke="#f1f1f1"/><path d="M56.8 364.5h4" stroke="#555"/><path d="M60.8 413.5H240.8" stroke="#f1f1f1"/><path d="M56.8 413.5h4" stroke="#555"/><path d="M102.5 67.7V448.0" stroke="#f1f1f1"/><path d="M102.5 448.0v4" stroke="#555"/><path d="M164.5 67.7V448.0" stroke="#f1f1f1"/><path d="M164.5 448.0v4" stroke="#555"/><path d="M225.5 67.7V448.0" stroke="#f1f1f1"/><path d="M225.5 448.0v4" stroke="#555"/><polyline points="60.8,127.3 61.3,128.6 61.9,130.5 62.4,132.9 62.9,135.5 63.5,138.2 64.0,140.6 64.6,142.5 65.1,143.8 65.6,144.5 66.1,145.4 66.6,146.6 67.1,148.0 67.7,149.5 68.2,151.0 68.7,152.4 69.2,153.6 69.7,154.5 70.2,155.2 70.7,156.4 71.2,158.0 71.8,160.1 72.3,162.5 72.8,165.1 73.3,167.9 73.9,170.7 74.4,173.3 74.9,175.7 75.5,177.8 76.0,179.4 76.5,180.6 77.0,181.2 77.6,182.1 78.1,183.2 78.7,184.3 79.2,185.4 79.8,186.3 80.3,186.9 80.8,188.0 81.3,189.6 81.8,191.6 82.3,193.9 82.8,196.4 83.4,198.9 83.9,201.2 84.4,203.2 84.9,204.8 85.4,205.9 85.9,206.6 86.4,207.7 86.9,209.1 87.4,210.6 87.9,212.2 88.4,213.9 88.9,215.4 89.4,216.8 89.9,217.9 90.4,218.6 90.9,219.3 91.4,220.4 91.9,221.8 92.4,223.3 93.0,225.0 93.5,226.6 94.0,228.1 94.5,229.5 95.0,230.6 95.5,231.3 96.0,231.8 96.5,232.6 97.0,233.5 97.5,234.6 98.0,235.7 98.6,236.8 99.1,237.9 99.6,238.8 100.1,239.6 100.6,240.1 101.1,241.1 101.6,242.5 102.1,244.2 102.6,246.2 103.2,248.4 103.7,250.5 104.2,252.5 104.7,254.2 105.2,255.6 105.7,256.6 106.2,257.3 106.7,258.4 107.2,259.7 107.7,261.3 108.2,262.9 108.7,264.5 109.2,266.1 109.7,267.4 110.2,268.5 110.7,269.2 111.2,269.4 111.8,269.6 112.3,269.9 112.8,270.3 113.4,270.7 113.9,271.1 114.4,271.5 115.0,271.9 115.5,272.3 116.0,272.6 116.6,272.8 117.1,273.0 117.6,273.5 118.1,274.1 118.7,275.0 119.2,275.9 119.7,277.0 120.2,278.1 120.8,279.2 121.3,280.3 121.8,281.2 122.4,282.1 122.9,282.7 123.4,283.2 123.9,283.8 124.5,284.7 125.0,285.8 125.6,286.9 126.1,288.0 126.7,288.9 127.2,289.5 127.7,291.2 128.2,293.9 128.8,297.0 129.3,299.7 129.8,301.4 130.3,301.4 130.8,301.4 131.3,301.4 131.8,301.4 132.3,301.4 132.8,301.4 133.3,301.4 133.8,301.4 134.3,301.4 134.8,301.4 135.3,302.1 135.9,303.0 136.4,304.1 136.9,305.5 137.5,307.0 138.0,308.5 138.5,310.0 139.1,311.5 139.6,312.9 140.1,314.0 140.7,314.9 141.2,315.6 141.7,315.1 142.3,314.3 142.8,313.2 143.4,312.2 143.9,311.1 144.5,310.3 145.0,309.8 145.5,310.1 146.0,310.6 146.6,311.1 147.1,311.8 147.6,312.5 148.2,313.2 148.7,314.0 149.2,314.7 149.7,315.4 150.2,315.9 150.8,316.4 151.3,316.7 151.8,316.8 152.3,317.0 152.9,317.2 153.4,317.4 153.9,317.7 154.4,317.9 155.0,318.2 155.5,318.5 156.0,318.9 156.5,319.2 157.1,319.5 157.6,319.7 158.1,320.0 158.6,320.2 159.2,320.4 159.7,320.6 160.2,320.7 160.7,319.9 161.3,318.8 161.8,317.3 162.4,315.8 162.9,314.3 163.5,313.2 164.0,312.4 164.5,311.5 165.1,310.0 165.6,308.3 166.2,306.3 166.7,304.6 167.3,303.1 167.8,302.2 168.3,302.9 168.9,304.0 169.4,305.3 170.0,306.7 170.5,308.0 171.1,309.1 171.6,309.8 172.1,308.9 172.6,307.7 173.1,306.2 173.6,304.4 174.1,302.5 174.7,300.6 175.2,298.7 175.7,296.9 176.2,295.4 176.7,294.2 177.2,293.3 177.7,293.7 178.3,294.2 178.8,294.8 179.3,295.5 179.8,296.3 180.4,297.2 180.9,298.0 181.4,298.7 181.9,299.3 182.5,299.8 183.0,300.2 183.5,300.0 184.0,299.8 184.5,299.6 185.0,299.2 185.5,298.9 186.1,298.6 186.6,298.2 187.1,298.0 187.6,297.8 188.1,297.6 188.6,298.0 189.2,298.7 189.7,299.5 190.3,300.3 190.8,301.1 191.4,301.8 191.9,302.2 192.4,301.6 192.9,300.8 193.4,299.8 193.9,298.7 194.4,297.4 195.0,296.1 195.5,294.8 196.0,293.7 196.5,292.7 197.0,291.9 197.5,291.3 198.0,291.6 198.5,292.1 199.0,292.6 199.5,293.3 200.0,293.9 200.5,294.6 201.0,295.1 201.5,295.6 202.0,295.9 202.5,295.6 203.1,295.2 203.6,294.7 204.1,294.1 204.7,293.4 205.2,292.7 205.7,292.0 206.3,291.3 206.8,290.7 207.3,290.2 207.9,289.8 208.4,289.5 208.9,289.5 209.4,289.6 209.9,289.7 210.4,289.8 210.9,289.9 211.4,290.0 211.9,290.1 212.5,290.2 213.0,290.3 213.5,290.4 214.0,290.5 214.5,290.6 215.0,290.7 215.5,290.8 216.0,290.8 216.5,290.6 217.0,290.2 217.6,289.8 218.1,289.3 218.6,288.8 219.2,288.2 219.7,287.7 220.2,287.2 220.7,286.7 221.2,286.3 221.8,285.9 222.3,285.7 222.8,286.9 223.4,288.6 223.9,290.9 224.5,293.2 225.0,295.5 225.6,297.2 226.1,298.4 226.6,297.7 227.2,296.6 227.7,295.3 228.3,293.9 228.8,292.6 229.4,291.5 229.9,290.8 230.4,291.0 231.0,291.4 231.5,291.8 232.0,292.3 232.6,292.8 233.1,293.3 233.6,293.9 234.2,294.4 234.7,294.9 235.2,295.3 235.8,295.7 236.3,295.9 236.8,296.1 237.3,296.4 237.8,296.8 238.3,297.2 238.8,297.6 239.3,298.0 239.8,298.4 240.3,298.7 240.8,298.9" fill="none" stroke="#9050b0" stroke-width="1.500" stroke-linejoin="round"/><polyline points="60.8,210.0 61.4,225.8 61.9,249.1 62.5,264.9 63.0,259.3 63.5,251.3 64.0,241.1 64.5,229.5 65.0,217.0 65.6,204.6 66.1,193.0 66.6,182.8 67.1,174.8 67.6,169.2 68.1,172.5 68.7,176.9 69.2,182.5 69.7,189.0 70.3,196.1 70.8,203.7 71.3,211.5 71.8,219.1 72.4,226.2 72.9,232.7 73.4,238.3 74.0,242.7 74.5,246.0 75.0,240.2 75.6,231.4 76.1,220.4 76.7,208.7 77.2,197.7 77.8,188.9 78.3,183.1 78.8,192.8 79.4,207.7 79.9,226.2 80.5,245.9 81.0,264.4 81.6,279.3 82.1,289.0 82.7,284.3 83.3,276.8 83.9,269.2 84.5,264.5 85.0,264.4 85.5,264.3 86.0,264.2 86.5,264.1 87.0,264.0 87.5,260.8 88.1,255.7 88.7,249.5 89.2,243.3 89.8,238.2 90.3,235.0 90.9,240.6 91.4,249.4 92.0,260.1 92.6,270.8 93.1,279.6 93.7,285.2 94.2,277.8 94.7,266.3 95.2,252.3 95.8,238.3 96.3,226.8 96.8,219.4 97.3,227.6 97.9,240.1 98.4,255.6 99.0,272.3 99.5,287.8 100.1,300.3 100.6,308.5 101.1,306.3 101.6,302.9 102.1,298.9 102.6,295.5 103.1,293.3 103.6,298.5 104.2,306.4 104.7,316.3 105.3,326.9 105.8,336.8 106.4,344.7 106.9,349.9 107.4,344.3 107.9,337.0 108.4,328.0 108.9,317.6 109.4,305.9 109.9,293.3 110.4,279.9 111.0,266.2 111.5,252.6 112.0,239.2 112.5,226.6 113.0,214.9 113.5,204.5 114.0,195.5 114.5,188.2 115.0,182.6 115.5,195.4 116.0,214.1 116.5,237.8 117.0,264.6 117.6,292.5 118.1,319.3 118.6,343.0 119.1,361.7 119.6,374.5 120.1,368.7 120.7,360.1 121.2,349.2 121.8,337.1 122.3,325.0 122.8,314.1 123.4,305.5 123.9,299.7 124.4,311.2 125.0,328.8 125.5,350.7 126.1,374.2 126.6,396.1 127.2,413.7 127.7,425.2 128.2,412.4 128.8,394.2 129.3,371.5 129.8,345.2 130.4,316.6 130.9,287.1 131.5,258.5 132.0,232.2 132.5,209.5 133.1,191.3 133.6,178.5 134.1,198.0 134.7,227.2 135.2,263.9 135.8,304.6 136.3,345.4 136.8,382.1 137.4,411.3 137.9,430.8 138.4,420.1 138.9,404.7 139.4,385.3 139.9,363.0 140.4,339.2 140.9,315.5 141.4,293.2 141.9,273.8 142.4,258.4 142.9,247.7 143.4,260.3 144.0,279.8 144.5,303.9 145.1,329.7 145.6,353.8 146.2,373.3 146.7,385.9 147.2,377.0 147.8,364.4 148.3,348.6 148.8,330.2 149.4,310.3 149.9,289.9 150.5,270.0 151.0,251.6 151.5,235.8 152.1,223.2 152.6,214.3 153.1,228.0 153.7,248.6 154.2,274.5 154.8,303.2 155.3,332.0 155.8,357.9 156.4,378.5 156.9,392.2 157.4,383.6 158.0,371.7 158.5,356.9 159.0,339.6 159.5,320.6 160.1,300.7 160.6,280.8 161.1,261.8 161.6,244.5 162.2,229.7 162.7,217.8 163.2,209.2 163.7,217.5 164.2,229.7 164.7,245.1 165.2,262.5 165.8,280.6 166.3,298.0 166.8,313.4 167.3,325.6 167.8,333.9 168.3,325.3 168.9,312.7 169.4,296.9 169.9,278.9 170.5,260.2 171.0,242.2 171.5,226.4 172.1,213.8 172.6,205.2 173.1,215.2 173.6,229.8 174.1,248.3 174.6,269.2 175.2,291.0 175.7,311.9 176.2,330.4 176.7,345.0 177.2,355.0 177.7,348.8 178.2,339.0 178.7,327.8 179.2,318.0 179.7,311.8 180.2,320.4 180.8,334.0 181.3,350.3 181.9,366.7 182.5,380.3 183.0,388.9 183.5,377.4 184.0,360.4 184.5,339.1 185.0,314.9 185.6,289.6 186.1,265.4 186.6,244.1 187.1,227.1 187.6,215.6 188.1,226.0 188.7,241.6 189.2,261.2 189.8,283.0 190.3,304.8 190.8,324.4 191.4,340.0 191.9,350.4 192.4,343.2 192.9,332.8 193.4,319.7 193.9,304.6 194.5,288.5 195.0,272.5 195.5,257.4 196.0,244.3 196.5,233.9 197.0,226.7 197.5,231.4 198.0,238.2 198.5,246.7 199.0,256.5 199.5,267.0 200.0,277.5 200.5,287.3 201.0,295.8 201.5,302.6 202.0,307.3 202.5,302.6 203.0,296.1 203.5,287.8 204.0,278.3 204.5,267.9 205.1,257.3 205.6,246.9 206.1,237.4 206.6,229.1 207.1,222.6 207.6,217.9 208.1,222.6 208.6,228.8 209.2,236.2 209.7,244.9 210.2,254.6 210.7,265.2 211.3,276.4 211.8,288.0 212.3,299.8 212.8,311.4 213.4,322.6 213.9,333.2 214.4,342.9 214.9,351.6 215.5,359.0 216.0,365.2 216.5,369.9 217.0,361.0 217.6,347.4 218.1,330.5 218.7,312.4 219.2,295.5 219.8,281.9 220.3,273.0 220.8,283.5 221.4,299.6 221.9,319.6 222.5,341.1 223.0,361.1 223.6,377.2 224.1,387.7 224.6,377.4 225.1,362.2 225.6,343.1 226.1,321.4 226.7,298.9 227.2,277.2 227.7,258.1 228.2,242.9 228.7,232.6 229.2,242.3 229.8,257.6 230.3,276.0 230.9,294.5 231.5,309.8 232.0,319.5 232.5,312.7 233.0,301.9 233.5,288.9 234.0,275.9 234.5,265.1 235.0,258.3 235.5,265.9 236.1,277.4 236.6,291.8 237.2,307.3 237.7,321.7 238.3,333.2 238.8,340.8 239.3,329.2 239.8,310.7 240.3,292.2 240.8,280.6" fill="none" stroke="#ff8214" stroke-width="2" stroke-linejoin="round"/><path d="M60.8 67.7V448.0H240.8" fill="none" stroke="#555" stroke-width="1.200"/><g font-size="14.500" fill="#333" text-anchor="end"><text x="54.6" y="73.4" textLength="27.400" lengthAdjust="spacingAndGlyphs">0.88</text><text x="54.6" y="122.9" textLength="27.400" lengthAdjust="spacingAndGlyphs">0.87</text><text x="54.6" y="172.6" textLength="27.400" lengthAdjust="spacingAndGlyphs">0.86</text><text x="54.6" y="222.0" textLength="27.400" lengthAdjust="spacingAndGlyphs">0.85</text><text x="54.6" y="271.1" textLength="27.400" lengthAdjust="spacingAndGlyphs">0.84</text><text x="54.6" y="320.3" textLength="27.400" lengthAdjust="spacingAndGlyphs">0.83</text><text x="54.6" y="369.5" textLength="27.400" lengthAdjust="spacingAndGlyphs">0.82</text><text x="54.6" y="418.5" textLength="27.400" lengthAdjust="spacingAndGlyphs">0.81</text></g><g font-size="14.500" fill="#333" text-anchor="middle"><text x="102.4" y="464.7" textLength="30.400" lengthAdjust="spacingAndGlyphs">6000</text><text x="163.7" y="464.7" textLength="30.400" lengthAdjust="spacingAndGlyphs">6500</text><text x="225.1" y="464.7" textLength="30.400" lengthAdjust="spacingAndGlyphs">7000</text></g><text x="151.8" y="18.3" font-size="19.500" font-weight="bold" text-anchor="middle" textLength="208" lengthAdjust="spacingAndGlyphs" fill="#111">CFD Quantity monitor</text><text x="151.6" y="484.8" font-size="18" font-weight="bold" text-anchor="middle" textLength="78.500" lengthAdjust="spacingAndGlyphs" fill="#111">iterations</text><text transform="translate(21.5,234.3) rotate(-90)" font-size="18" font-weight="bold" text-anchor="middle" textLength="70" lengthAdjust="spacingAndGlyphs" fill="#111">quantity</text><rect x="58.5" y="22.5" width="182.500" height="44.500" fill="#fff" stroke="#555" stroke-width="1"/><path d="M64.3 34.0h21.200" stroke="#9050b0" stroke-width="1.600"/><text x="90.4" y="39.3" font-size="15.500" font-weight="bold" fill="#111" textLength="145" lengthAdjust="spacingAndGlyphs">1_efficiency-avg(-)</text><path d="M64.3 54.3h21.200" stroke="#ff8214" stroke-width="1.600"/><text x="90.4" y="59.6" font-size="15.500" font-weight="bold" fill="#111" textLength="107" lengthAdjust="spacingAndGlyphs">1_efficiency(-)</text></svg></div><div class="a" style="left:1310px;top:931px;width:16px;height:1px;background-image:linear-gradient(90deg,#aaa 1px,transparent 1px);background-size:3px 1px"></div><div class="hl" style="left:617px;top:928px;width:1387px;background:#c9c4bd"></div><div class="cmb" style="left:1631px;top:159px;width:168px;height:22px;font-size:13px;letter-spacing:0.34px;">Steady-state report (eff</div><div class="btn" style="left:1805px;top:159px;width:82px;height:22px;font-size:13px;letter-spacing:-0.23px;">Save as PDF</div><div class="btn" style="left:1893px;top:159px;width:85px;height:22px;font-size:13px;letter-spacing:-0.19px;">Open as PDF</div><div class="a" style="left:1631px;top:187px;width:345px;height:360px;overflow:hidden;background:#1d2530"><svg width="345" height="360" viewBox="0 0 345 360" font-family="Liberation Sans"><defs><linearGradient id="hbg" x1="0" y1="0" x2="1" y2="1"><stop offset="0" stop-color="#1b222c"/><stop offset=".5" stop-color="#1f2731"/><stop offset="1" stop-color="#1c232d"/></linearGradient></defs><rect width="345" height="360" fill="url(#hbg)"/><polygon points="0,266 98,360 0,360" fill="#27303a"/><path d="M139.8,98.9 Q177.0,62.5 217.6,101.4" fill="none" stroke="#f39a1e" stroke-width="3.100" stroke-linecap="round" stroke-dasharray="14 7 200"/><path d="M218.0,90.7 L217.6,101.4 L206.4,101.8" fill="none" stroke="#f39a1e" stroke-width="3.100" stroke-linecap="round" stroke-linejoin="round"/><path d="M96.4,98.5 Q131.0,63.0 175.7,101.4" fill="none" stroke="#e0242c" stroke-width="3.100" stroke-linecap="round"/><path d="M176.1,90.7 L175.7,101.4 L164.5,101.8" fill="none" stroke="#e0242c" stroke-width="3.100" stroke-linecap="round" stroke-linejoin="round"/><path d="M223.6,108.0 Q260.0,145.5 302.2,105.7" fill="none" stroke="#1e9ad2" stroke-width="3.100" stroke-linecap="round" stroke-dasharray="15 9 200"/><path d="M291.0,105.3 L302.2,105.7 L302.6,116.1" fill="none" stroke="#1e9ad2" stroke-width="3.100" stroke-linecap="round" stroke-linejoin="round"/><path d="M181.0,108.0 Q217.0,145.5 259.5,105.7" fill="none" stroke="#5ab436" stroke-width="3.100" stroke-linecap="round"/><path d="M248.3,105.3 L259.5,105.7 L259.9,116.1" fill="none" stroke="#5ab436" stroke-width="3.100" stroke-linecap="round" stroke-linejoin="round"/><text x="44.5" y="163.0" font-size="70.500" font-weight="bold" font-style="italic" fill="#fff" textLength="118" lengthAdjust="spacingAndGlyphs">CFD</text><text x="167.3" y="162.5" font-size="45" font-style="italic" fill="#fff" stroke="#1e2630" stroke-width="1.200" textLength="133" lengthAdjust="spacingAndGlyphs">support</text><g font-size="27.900" fill="#fff" text-anchor="middle"><text x="172.8" y="219.9">Hi, this is steady-state</text><text x="172.8" y="256.7">CFD simulation report</text><text x="172.8" y="293.8">of:</text><text x="172.8" y="330.6">axial-fan-stage</text></g><path d="M159.0,360.5 q3,-3.500 7,0" fill="none" stroke="#ccc" stroke-width="1"/></svg></div><div class="sbv" style="left:1976px;top:187px;width:14px;height:360px;border-width:0"></div><div class="a" style="left:1976px;top:201px;width:14px;height:27px;background:linear-gradient(90deg,#fdfcfb,#f1eeea);border-top:1px solid #cbc6c0;border-bottom:1px solid #cbc6c0"></div><div class="a" style="left:1977px;top:187px;width:12px;height:13px;background:#efebe7"></div><div class="a" style="left:1977px;top:534px;width:12px;height:13px;background:#efebe7"></div><div class="au" style="left:1979px;top:191px"></div><div class="ad" style="left:1979px;top:538px"></div><div class="sbh" style="left:1631px;top:547px;width:345px;height:14px;border-width:0"></div><div class="a" style="left:1631px;top:547px;width:13px;height:14px;background:#efebe7"></div><div class="a" style="left:1963px;top:547px;width:13px;height:14px;background:#efebe7"></div><div class="thumbh" style="left:1644px;top:548px;width:204px;height:12px"></div><div class="al" style="left:1634px;top:550px"></div><div class="ar" style="left:1967px;top:550px"></div><div class="vl" style="left:1962px;top:547px;height:14px;background:#cbc6c0"></div><div class="vl" style="left:1975px;top:547px;height:14px;background:#cbc6c0"></div><div class="cmb" style="left:1631px;top:615px;width:168px;height:22px;font-size:13px;letter-spacing:0.04px;">TFEA report</div><div class="btn" style="left:1805px;top:615px;width:82px;height:22px;font-size:13px;letter-spacing:-0.23px;">Save as PDF</div><div class="btn" style="left:1893px;top:615px;width:85px;height:22px;font-size:13px;letter-spacing:-0.19px;">Open as PDF</div><div class="a" style="left:1631px;top:643px;width:345px;height:259px;overflow:hidden;background:#1d2530"><svg width="345" height="259" viewBox="0 0 345 259" font-family="Liberation Sans"><defs><linearGradient id="hbg3" x1="0" y1="0" x2="1" y2="1"><stop offset="0" stop-color="#1d2530"/><stop offset="1" stop-color="#1b222c"/></linearGradient><linearGradient id="bl3" x1="0" y1="0" x2="1" y2="1"><stop offset="0" stop-color="#7a7c7e"/><stop offset=".6" stop-color="#5a5d60"/><stop offset="1" stop-color="#4a4d52"/></linearGradient><linearGradient id="lb3" x1="0" y1="0" x2="0" y2="1"><stop offset="0" stop-color="#202832"/><stop offset=".5" stop-color="#262e38"/><stop offset="1" stop-color="#2c343d"/></linearGradient><linearGradient id="lc3" x1="1" y1="0" x2="0" y2="1"><stop offset="0" stop-color="#2f373f"/><stop offset=".5" stop-color="#363e46"/><stop offset="1" stop-color="#4a5156"/></linearGradient></defs><rect width="345" height="259" fill="url(#hbg3)"/><polygon points="0,0 22,0 269,259 0,259" fill="url(#lb3)"/><polygon points="0,151 109,259 0,259" fill="url(#lc3)"/><g font-size="27.900" fill="#fff" text-anchor="middle"><text x="172.800" y="1">report of:</text><text x="172.800" y="37.800">axial-fan-stage</text></g><g font-size="16" fill="#c4c6c8" text-anchor="middle"><text x="172.400" y="81">Created by TFEA 20.09 on Fri Nov 13</text><text x="172.600" y="107">14:25:23 2020</text></g><path d="M122 84h40" stroke="#c4c6c8" stroke-width="1" stroke-dasharray="1 1.500"/><path d="M114.3,186.7 L202.1,124.2 Q219.0,172.0 255.6,195.5 Q253.0,198.0 249.0,199.0 Q189.0,232.0 133.4,244.3 Q117.0,217.0 114.3,186.7 Z" fill="url(#bl3)"/><path d="M202.1,124.2 Q219.0,172.0 255.6,195.5 L252.0,197.5 Q215.0,172.0 199.0,126.5 Z" fill="#8e9092"/><ellipse cx="0" cy="0" rx="17.500" ry="26.500" transform="translate(225.2,169.5) rotate(-20)" fill="#8c8c88"/><ellipse cx="0" cy="0" rx="14.500" ry="24" transform="translate(227.2,169.0) rotate(-20)" fill="#a6a6a0"/><path d="M215.0,149.0 Q221.0,177.0 243.0,190.0" fill="none" stroke="#6f706e" stroke-width="3"/><path d="M35 252v6" stroke="#e0d020" stroke-width="1"/><path d="M30 254h3" stroke="#20c020"/><path d="M38 255h3" stroke="#e02020"/></svg></div><div class="sbv" style="left:1976px;top:643px;width:14px;height:259px;border-width:0"></div><div class="a" style="left:1976px;top:659px;width:14px;height:28px;background:linear-gradient(90deg,#fdfcfb,#f1eeea);border-top:1px solid #cbc6c0;border-bottom:1px solid #cbc6c0"></div><div class="hl" style="left:1976px;top:657px;width:14px;background:#cbc6c0"></div><div class="a" style="left:1977px;top:643px;width:12px;height:15px;background:#efebe7"></div><div class="a" style="left:1977px;top:889px;width:12px;height:13px;background:#efebe7"></div><div class="au" style="left:1979px;top:647px"></div><div class="ad" style="left:1979px;top:893px"></div><div class="sbh" style="left:1631px;top:902px;width:345px;height:14px;border-width:0"></div><div class="a" style="left:1631px;top:902px;width:13px;height:14px;background:#efebe7"></div><div class="a" style="left:1963px;top:902px;width:13px;height:14px;background:#efebe7"></div><div class="thumbh" style="left:1644px;top:903px;width:122px;height:12px"></div><div class="al" style="left:1634px;top:905px"></div><div class="ar" style="left:1967px;top:905px"></div><div class="vl" style="left:1962px;top:902px;height:14px;background:#cbc6c0"></div><div class="vl" style="left:1975px;top:902px;height:14px;background:#cbc6c0"></div><div class="t " style="left:622px;top:938px;font-size:13px;letter-spacing:0.16px;">Output Messages</div><svg class="a" style="left:1155px;top:940px;width:26px;height:12px" viewBox="0 0 26 12"><rect x="0.5" y="0.5" width="10" height="10" rx="2" fill="#efebe7" stroke="#6a6660"/><rect x="4.5" y="2.5" width="4" height="4" fill="none" stroke="#6a6660"/><rect x="2.5" y="4.5" width="4" height="4" fill="#efebe7" stroke="#6a6660"/><rect x="14.5" y="0.5" width="10" height="10" rx="2" fill="#efebe7" stroke="#6a6660"/><path d="M17 3l5 5M22 3l-5 5" stroke="#3a3835" stroke-width="1.8"/></svg><div class="box" style="left:627px;top:964px;width:546px;height:70px;overflow:hidden"><div class="a" style="left:0;top:14px;width:530px;height:14px;background:#f3f2f0"></div><div class="ar" style="left:40px;top:3px;border-width:4px 0 4px 5px"></div><div class="ad" style="left:38px;top:18px"></div><div class="t" style="left:55px;top:-1px;color:#1a9a28;font-size:13px;letter-spacing:0.14px;">Using CAE Processor library version 20.09v2</div><div class="t" style="left:55px;top:13px;color:#1a9a28;font-size:13px;letter-spacing:0.14px;">The license is issued as&nbsp; Perpetual</div><div class="t" style="left:75px;top:27px;color:#1a9a28;font-size:13px;letter-spacing:0.14px;">The license is issued as&nbsp; Perpetual</div><div class="t" style="left:75px;top:41px;color:#1a9a28;font-size:13px;letter-spacing:-0.13px;">The license is issued for CFD SUPPORT</div><div class="t" style="left:75px;top:55px;color:#1a9a28;font-size:13px;letter-spacing:0.16px;">The license is issued for Testing License</div><div class="sbv" style="left:530px;top:0;width:14px;height:68px;border-width:0 0 0 1px"></div><div class="thumb" style="left:531px;top:41px;width:13px;height:14px;background:#e3e0dc"></div><div class="au" style="left:534px;top:5px"></div><div class="ad" style="left:534px;top:59px"></div></div><div class="chk" style="left:627px;top:1043px"></div><div class="t " style="left:646px;top:1043px;font-size:13px;letter-spacing:0.17px;">Show full messages</div><div class="btn" style="left:998px;top:1039px;width:90px;height:23px;line-height:21px;font-size:13px;letter-spacing:0.08px;">Save to File...</div><div class="btn" style="left:1093px;top:1039px;width:80px;height:23px;line-height:21px;font-size:13px;letter-spacing:0.06px;">Clear</div><div class="a" style="left:1183px;top:996px;width:1px;height:16px;background-image:linear-gradient(#aaa 1px,transparent 1px);background-size:1px 3px"></div><div class="t " style="left:1192px;top:938px;font-size:13px;letter-spacing:-0.09px;">TCAE Output</div><svg class="a" style="left:1977px;top:940px;width:26px;height:12px" viewBox="0 0 26 12"><rect x="0.5" y="0.5" width="10" height="10" rx="2" fill="#efebe7" stroke="#6a6660"/><rect x="4.5" y="2.5" width="4" height="4" fill="none" stroke="#6a6660"/><rect x="2.5" y="4.5" width="4" height="4" fill="#efebe7" stroke="#6a6660"/><rect x="14.5" y="0.5" width="10" height="10" rx="2" fill="#efebe7" stroke="#6a6660"/><path d="M17 3l5 5M22 3l-5 5" stroke="#3a3835" stroke-width="1.8"/></svg><div class="cmb" style="left:1197px;top:963px;width:195px;height:22px;padding-left:4px;font-size:13px;letter-spacing:0.30px;">axial-fan-stage.tcae</div><div class="cmb" style="left:1398px;top:963px;width:195px;height:22px;padding-left:4px;font-size:13px;letter-spacing:0.35px;">Solver output</div><div class="btn" style="left:1599px;top:963px;width:195px;height:22px;font-size:13px;letter-spacing:0.33px;">Save output to file...</div><div class="btn" style="left:1800px;top:963px;width:195px;height:22px;font-size:13px;letter-spacing:0.21px;">Clean window</div><div class="box" style="left:1197px;top:992px;width:798px;height:70px;overflow:hidden;font-family:'Liberation Mono',monospace;font-size:11.500px;letter-spacing:.265px"><div class="t nofit" style="left:4px;top:.5px;line-height:15px;color:#3c3c3c">axial-fan-stage.FREQ03.vtu</div><div class="t nofit" style="left:4px;top:15.500px;line-height:15px;color:#3c3c3c">Step 4, time 1875.16873, Displacement, 3 components, 195293 values</div><div class="t nofit" style="left:4px;top:30.500px;line-height:15px;color:#3c3c3c">Step 4, time 1875.16873, Stress, 10 components, 195293 values</div><div class="t nofit" style="left:4px;top:45.500px;line-height:15px;color:#3c3c3c">END</div><div class="sbv" style="left:782px;top:0;width:14px;height:68px;border-width:0 0 0 1px"></div><div class="thumb" style="left:783px;top:12px;width:13px;height:14px"></div><div class="au" style="left:786px;top:5px"></div><div class="ad" style="left:786px;top:59px"></div></div></body></html>
